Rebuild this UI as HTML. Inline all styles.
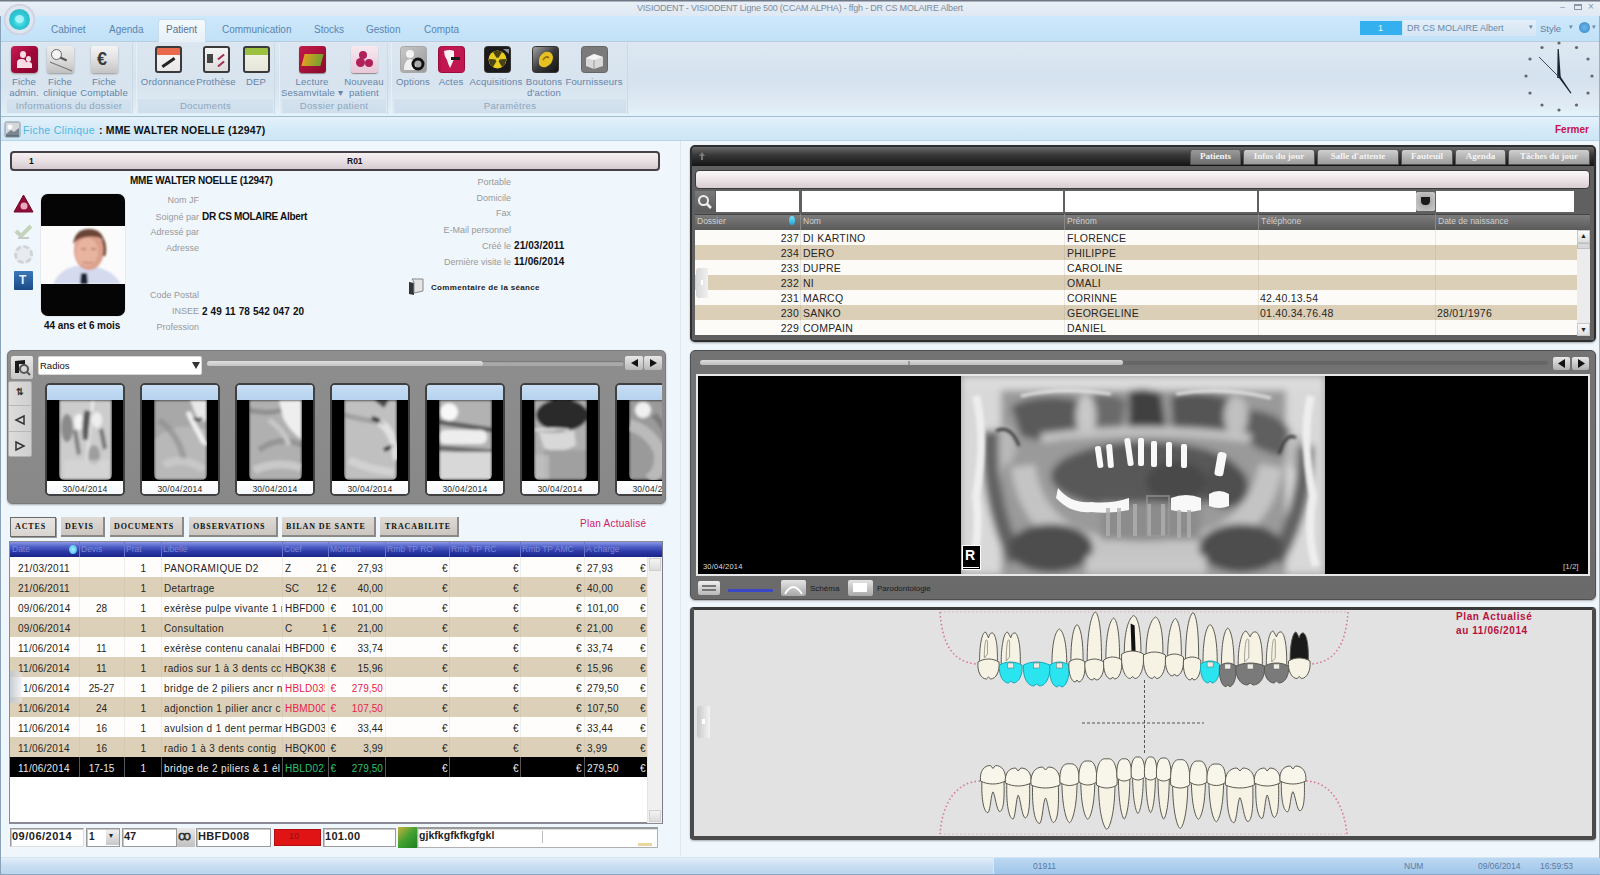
<!DOCTYPE html>
<html><head><meta charset="utf-8">
<style>
*{margin:0;padding:0;box-sizing:border-box}
html,body{width:1600px;height:875px;overflow:hidden;background:#eff6fc;font-family:"Liberation Sans",sans-serif;position:relative}
.a{position:absolute}
.t{position:absolute;white-space:nowrap;line-height:1}
/* top */
#title{left:0;top:0;width:1600px;height:16px;background:linear-gradient(#6d7884 0,#6d7884 1px,#e8eff7 2px,#dfe9f3 100%)}
#tabs{left:0;top:16px;width:1600px;height:25px;background:linear-gradient(#cde8fb,#c2e1f7)}
#ribbon{left:0;top:41px;width:1600px;height:76px;background:linear-gradient(#dde8f2 0,#d5e2ef 50%,#dfeaf4 85%,#e4f4fb 100%);border-top:1px solid #b6cde0;border-bottom:1px solid #9fbdcc}
#hdr{left:0;top:117px;width:1600px;height:24px;background:linear-gradient(#e4f2fb,#d3e9f8 60%,#cfe6f6);border-bottom:1px solid #b9d4e6}
#status{left:0;top:857px;width:1600px;height:18px;background:linear-gradient(#e2eef9,#c9def2 50%,#bcd6ee);border-top:1px solid #d4e4f2;border-bottom:1px solid #8aa6c0}
.tab{position:absolute;top:24px;font-size:10px;color:#5a84b2}
.grp{position:absolute;top:44px;height:70px;border-right:1px solid #c5d6e4;}
.glab{position:absolute;top:99px;height:14px;background:linear-gradient(#d3e2ee,#cfdeeb);font-size:9.6px;letter-spacing:0.3px;color:#8ea6be;text-align:center;line-height:14px}
.ico{position:absolute;top:46px;width:27px;height:27px;border-radius:3px}
.lab{position:absolute;font-size:9.6px;letter-spacing:0.15px;color:#6686aa;text-align:center;line-height:11px;white-space:nowrap}
</style></head><body>
<div id="title" class="a"></div>
<div class="t" style="left:637px;top:4px;font-size:9px;color:#7f8b98;letter-spacing:-0.2px">VISIODENT - VISIODENT Ligne 500 (CCAM ALPHA) - ffgh - DR CS MOLAIRE Albert</div>
<div id="tabs" class="a"></div>
<div id="ribbon" class="a"></div>
<div id="hdr" class="a"></div>
<div id="status" class="a"></div>

<!-- orb -->
<div class="a" style="left:4px;top:4px;width:31px;height:31px;border-radius:50%;background:radial-gradient(circle at 50% 50%,#e8f0f8 0,#dce6f0 60%,#c8b8cc 75%,#e4eaf2 100%)"></div>
<div class="a" style="left:9px;top:9px;width:21px;height:21px;border-radius:50%;background:radial-gradient(circle at 50% 55%,#7af0f4 0,#2cc8d4 45%,#3aaec4 100%)"></div>
<div class="a" style="left:15px;top:15px;width:9px;height:8px;border-radius:50% 50% 50% 50%;background:#b8f6fa;opacity:.8"></div>
<!-- tabs -->
<div class="a" style="left:158px;top:19px;width:48px;height:23px;background:linear-gradient(#f4f9fd,#e6f0f8);border:1px solid #c8dcec;border-bottom:none;border-radius:3px 3px 0 0"></div>
<div class="tab" style="left:51px">Cabinet</div>
<div class="tab" style="left:109px">Agenda</div>
<div class="tab" style="left:166px;color:#5a7290">Patient</div>
<div class="tab" style="left:222px">Communication</div>
<div class="tab" style="left:314px">Stocks</div>
<div class="tab" style="left:366px">Gestion</div>
<div class="tab" style="left:424px">Compta</div>
<!-- window controls -->
<div class="t" style="left:1560px;top:3px;font-size:9px;color:#8a96a4">–</div>
<div class="a" style="left:1574px;top:4px;width:8px;height:6px;border:1px solid #8a96a4;border-top-width:2px"></div>
<div class="t" style="left:1588px;top:2px;font-size:10px;color:#8a96a4">×</div>
<!-- right controls -->
<div class="a" style="left:1360px;top:21px;width:42px;height:14px;background:#35b0ee"></div>
<div class="t" style="left:1378px;top:24px;font-size:9px;color:#e8f6ff">1</div>
<div class="a" style="left:1403px;top:20px;width:133px;height:16px;background:linear-gradient(#e2eef8,#d6e6f4)"></div>
<div class="t" style="left:1407px;top:24px;font-size:9px;color:#6a88a8">DR CS MOLAIRE Albert</div>
<div class="t" style="left:1529px;top:23px;font-size:7px;color:#6a88a8">▾</div>
<div class="t" style="left:1540px;top:24px;font-size:9.5px;color:#5f82a8">Style</div>
<div class="t" style="left:1569px;top:23px;font-size:7px;color:#6a88a8">▾</div>
<div class="a" style="left:1579px;top:22px;width:11px;height:11px;border-radius:50%;background:radial-gradient(#6ab8ea,#3a88c8)"></div>
<div class="t" style="left:1592px;top:23px;font-size:7px;color:#6a88a8">▾</div>
<!-- ribbon groups -->
<div class="a" style="left:2px;top:43px;width:131px;height:71px;background:linear-gradient(#dbe6f0,#d7e3ee 60%,#e1edf6);border-right:1px solid #cadbe8"></div>
<div class="a" style="left:136px;top:43px;width:139px;height:71px;background:linear-gradient(#dbe6f0,#d7e3ee 60%,#e1edf6);border-right:1px solid #cadbe8;border-left:1px solid #e6eef6"></div>
<div class="a" style="left:279px;top:43px;width:109px;height:71px;background:linear-gradient(#dbe6f0,#d7e3ee 60%,#e1edf6);border-right:1px solid #cadbe8;border-left:1px solid #e6eef6"></div>
<div class="a" style="left:391px;top:43px;width:237px;height:71px;background:linear-gradient(#dbe6f0,#d7e3ee 60%,#e1edf6);border-right:1px solid #cadbe8;border-left:1px solid #e6eef6"></div>
<div class="glab" style="left:7px;width:124px">Informations du dossier</div>
<div class="glab" style="left:138px;width:135px">Documents</div>
<div class="glab" style="left:282px;width:104px">Dossier patient</div>
<div class="glab" style="left:394px;width:232px">Paramètres</div>
<!-- icons -->
<div class="ico" style="left:11px;background:linear-gradient(135deg,#c81c58,#a00838 50%,#8a0630);box-shadow:0 1px 2px #999;border-radius:4px"></div>
<div class="a" style="left:20px;top:51px;width:6px;height:7px;border-radius:50%;background:#f8dce6"></div>
<div class="a" style="left:26px;top:56px;width:5px;height:6px;border-radius:50%;background:#f8dce6"></div>
<div class="a" style="left:17px;top:59px;width:9px;height:9px;border-radius:4px 4px 0 0;background:#f8dce6"></div>
<div class="a" style="left:24px;top:62px;width:8px;height:6px;border-radius:3px 3px 0 0;background:#f8dce6"></div>
<div class="ico" style="left:47px;background:linear-gradient(#ececec,#d8d8d8 60%,#c0c0c0);box-shadow:0 1px 2px #999"></div>
<div class="a" style="left:51px;top:49px;width:11px;height:11px;border-radius:50%;border:1.5px solid #666;background:#f4f4f4"></div>
<div class="a" style="left:60px;top:58px;width:7px;height:2px;background:#555;transform:rotate(25deg)"></div><div class="a" style="left:49px;top:66px;width:24px;height:1px;background:#777;transform:rotate(22deg)"></div>
<div class="ico" style="left:91px;background:linear-gradient(#f4f4f4,#e0e0e0 50%,#c4c4c4);box-shadow:0 1px 2px #999"></div>
<div class="t" style="left:97px;top:50px;font-size:18px;font-weight:bold;color:#3a3a3a">€</div>
<div class="ico" style="left:155px;background:linear-gradient(#e86a4a 0,#e86a4a 30%,#f4f4f4 30%,#e8e8e8);border:2px solid #3a3a3a"></div>
<div class="a" style="left:161px;top:61px;width:15px;height:3px;background:#222;transform:rotate(-35deg)"></div>
<div class="ico" style="left:203px;background:linear-gradient(#f4f4f4,#dcdcdc);border:2px solid #3a3a3a"></div>
<div class="a" style="left:207px;top:54px;width:6px;height:9px;background:#444"></div>
<div class="a" style="left:217px;top:56px;width:8px;height:2px;background:#a03050;transform:rotate(-40deg)"></div>
<div class="a" style="left:217px;top:63px;width:8px;height:2px;background:#a03050;transform:rotate(-40deg)"></div>
<div class="ico" style="left:243px;background:linear-gradient(#9cc040 0,#9cc040 30%,#f0f0e4 30%,#e4e4d8);border:2px solid #3a3a3a"></div>
<div class="ico" style="left:299px;background:linear-gradient(135deg,#c41a4a,#8a0a2a);box-shadow:0 1px 1px #888"></div>
<div class="a" style="left:303px;top:54px;width:19px;height:12px;background:linear-gradient(90deg,#e0a020,#70a030);transform:skewX(-15deg)"></div>
<div class="ico" style="left:351px;background:linear-gradient(#f8e8f0,#e8c8d8);box-shadow:0 1px 1px #888"></div>
<div class="a" style="left:359px;top:51px;width:8px;height:8px;border-radius:50%;background:#b0205a"></div>
<div class="a" style="left:356px;top:58px;width:9px;height:9px;border-radius:50%;background:#b0205a"></div>
<div class="a" style="left:365px;top:59px;width:8px;height:8px;border-radius:50%;background:#b0205a"></div>
<svg class="a" style="left:400px;top:46px" width="28" height="28" viewBox="0 0 28 28"><defs><linearGradient id="opg" x1="0" y1="0" x2="1" y2="1"><stop offset="0" stop-color="#c8c8c8"/><stop offset="1" stop-color="#9a9a9a"/></linearGradient></defs><rect x="0.5" y="0.5" width="26" height="26" rx="3" fill="url(#opg)" stroke="#a8a8a8"/><circle cx="10" cy="8" r="4" fill="#f4f4f4"/><path d="M4 24 Q4 14 10 13 Q16 14 16 24Z" fill="#f0f0f0"/><circle cx="18" cy="18" r="5" fill="none" stroke="#111" stroke-width="3"/></svg>
<svg class="a" style="left:438px;top:46px" width="28" height="28" viewBox="0 0 28 28"><rect x="0.5" y="0.5" width="26" height="26" rx="3" fill="#b8124a" stroke="#9a0a3a"/><path d="M3 0 L22 0 L26 4 L26 26 L3 26Z" fill="#c81c58" opacity=".5"/><path d="M6 5 Q12 3 16 5 L16 13 Q14 18 12 22 Q10 18 9 14 Q6 10 6 5Z" fill="#f8f0f4"/><rect x="13" y="11" width="9" height="3" fill="#1a1a1a"/></svg>
<svg class="a" style="left:484px;top:46px" width="28" height="28" viewBox="0 0 28 28"><rect x="0.5" y="0.5" width="26" height="26" rx="3" fill="#1a1a1a" stroke="#333"/><circle cx="13.5" cy="13.5" r="9" fill="#e8cc20"/><path d="M13.5 13.5 L9 6 A9 9 0 0 1 18 6Z M13.5 13.5 L22 13 A9 9 0 0 1 18 21Z M13.5 13.5 L9 21 A9 9 0 0 1 5 13Z" fill="#2a2a10" opacity=".85"/><circle cx="13.5" cy="13.5" r="2" fill="#e8cc20"/><path d="M19 3 L25 3 L25 8Z" fill="#ddd" opacity=".6"/></svg>
<svg class="a" style="left:532px;top:46px" width="28" height="28" viewBox="0 0 28 28"><defs><linearGradient id="bag" x1="0" y1="0" x2="1" y2="1"><stop offset="0" stop-color="#a8a8a8"/><stop offset=".5" stop-color="#3a3a3a"/><stop offset="1" stop-color="#111"/></linearGradient></defs><rect x="0.5" y="0.5" width="26" height="26" rx="3" fill="url(#bag)" stroke="#333"/><path d="M7 18 Q6 9 13 6 Q20 5 21 11 Q21 18 14 21 Q9 22 7 18Z" fill="#e4c020"/><path d="M11 14 Q14 9 17 12" stroke="#8a6a10" stroke-width="1.5" fill="none"/></svg>
<svg class="a" style="left:581px;top:46px" width="28" height="28" viewBox="0 0 28 28"><rect x="0.5" y="0.5" width="26" height="26" rx="3" fill="#7a7a7a" stroke="#666"/><path d="M5 12 L13 8 L22 11 L22 20 L13 23 L5 20Z" fill="#d8d8d8"/><path d="M13 8 L22 11 L13 14 L5 12Z" fill="#f4f4f4"/><path d="M13 14 L13 23" stroke="#999" stroke-width="1"/></svg>
<!-- labels -->
<div class="lab" style="left:24px;top:76px;transform:translateX(-50%)">Fiche<br>admin.</div>
<div class="lab" style="left:60px;top:76px;transform:translateX(-50%)">Fiche<br>clinique</div>
<div class="lab" style="left:104px;top:76px;transform:translateX(-50%)">Fiche<br>Comptable</div>
<div class="lab" style="left:168px;top:76px;transform:translateX(-50%)">Ordonnance</div>
<div class="lab" style="left:216px;top:76px;transform:translateX(-50%)">Prothèse</div>
<div class="lab" style="left:256px;top:76px;transform:translateX(-50%)">DEP</div>
<div class="lab" style="left:312px;top:76px;transform:translateX(-50%)">Lecture<br>Sesamvitale ▾</div>
<div class="lab" style="left:364px;top:76px;transform:translateX(-50%)">Nouveau<br>patient</div>
<div class="lab" style="left:413px;top:76px;transform:translateX(-50%)">Options</div>
<div class="lab" style="left:451px;top:76px;transform:translateX(-50%)">Actes</div>
<div class="lab" style="left:496px;top:76px;transform:translateX(-50%)">Acquisitions</div>
<div class="lab" style="left:544px;top:76px;transform:translateX(-50%)">Boutons<br>d'action</div>
<div class="lab" style="left:594px;top:76px;transform:translateX(-50%)">Fournisseurs</div>
<!-- clock -->
<svg class="a" style="left:1518px;top:38px" width="84" height="78" viewBox="0 0 84 78">
<g fill="#666">
<circle cx="41" cy="5" r="1.6"/><circle cx="58.5" cy="9.5" r="1.6"/><circle cx="70" cy="21" r="1.6"/><circle cx="74" cy="38" r="1.6"/><circle cx="70" cy="55" r="1.6"/><circle cx="58.5" cy="67" r="1.6"/><circle cx="41" cy="72" r="1.6"/><circle cx="24" cy="67" r="1.6"/><circle cx="12" cy="55" r="1.6"/><circle cx="8" cy="38" r="1.6"/><circle cx="12" cy="21" r="1.6"/><circle cx="24" cy="9.5" r="1.6"/>
</g>
<path d="M39.2 40 L42.8 40 L40.8 11 L39.6 11 Z" fill="#1a2530"/>
<path d="M39.5 38 L42.5 38.5 L53.5 55 L52.5 55.5 Z" fill="#1a2530"/>
<line x1="41" y1="39" x2="21" y2="19" stroke="#3a4a58" stroke-width="1"/>
</svg>
<!-- header -->
<svg class="a" style="left:4px;top:121px" width="17" height="17" viewBox="0 0 17 17"><rect x="1" y="1" width="15" height="15" rx="1.5" fill="#d4d8dc" stroke="#8a949e"/><circle cx="6" cy="6" r="2.5" fill="#fafafa"/><path d="M2 13 L7 9 L10 11 L15 7 L15 15 L2 15Z" fill="#7a8692"/><path d="M2 15 L15 15" stroke="#5a6670" stroke-width="1.5"/></svg>
<div class="t" style="left:23px;top:125px;font-size:10.5px;color:#4ab8e4;letter-spacing:0.38px">Fiche Clinique</div>
<div class="t" style="left:99px;top:125px;font-size:10.5px;color:#111;font-weight:bold;letter-spacing:0.16px">: MME WALTER NOELLE (12947)</div>
<div class="t" style="left:1555px;top:125px;font-size:10px;color:#c8104a;font-weight:bold">Fermer</div>

<!-- ============ LEFT: patient info ============ -->
<div class="a" style="left:10px;top:151px;width:650px;height:20px;border:2px solid #454045;border-radius:4px;background:linear-gradient(#f6f0f2,#e8dfe3 50%,#d4cacf)"></div>
<div class="t" style="left:29px;top:157px;font-size:8.5px;font-weight:bold;color:#111">1</div>
<div class="t" style="left:347px;top:157px;font-size:8.5px;font-weight:bold;color:#111">R01</div>
<div class="t" style="left:130px;top:176px;font-size:10px;font-weight:bold;color:#111;letter-spacing:-0.22px">MME WALTER NOELLE (12947)</div>
<!-- side icons -->
<svg class="a" style="left:13px;top:194px" width="21" height="19"><path d="M10.5 1 L20 18 L1 18 Z" fill="#900c38" stroke="#700828" stroke-width="1"/><circle cx="11" cy="12" r="3.5" fill="#e8a8c0"/></svg>
<svg class="a" style="left:14px;top:222px" width="19" height="17"><path d="M2 9 L7 14 L17 4" fill="none" stroke="#c4d4bc" stroke-width="4"/><path d="M4 16 L15 16" stroke="#c8ccc8" stroke-width="2"/></svg>
<div class="a" style="left:14px;top:245px;width:19px;height:19px;border-radius:50%;border:3px dashed #d0d4d8;background:#e8ecf0"></div>
<div class="a" style="left:14px;top:271px;width:19px;height:19px;background:linear-gradient(#3a78b8,#1a4a88);border-radius:1px"></div>
<div class="t" style="left:19px;top:274px;font-size:12px;font-weight:bold;color:#e0f0ff">T</div>
<!-- photo -->
<div class="a" style="left:41px;top:194px;width:84px;height:122px;background:#050505;border-radius:7px;overflow:hidden;box-shadow:0 0 1px #888">
<svg class="a" style="left:0;top:32px" width="84" height="58" viewBox="0 0 84 58"><defs><filter id="phb"><feGaussianBlur stdDeviation="1.1"/></filter></defs>
<rect width="84" height="58" fill="#fbfbfb"/>
<g filter="url(#phb)">
<path d="M12 58 Q18 44 34 40 L52 40 Q72 44 80 58 Z" fill="#d6daee"/>
<path d="M40 47 L46 47 L47 58 L39 58Z" fill="#1c2030"/>
<ellipse cx="48" cy="24" rx="15" ry="20" fill="#dca08c"/>
<ellipse cx="46" cy="26" rx="11" ry="14" fill="#e8b4a0"/>
<path d="M32 18 Q34 3 48 3 Q62 3 64 18 Q62 12 56 11 Q45 9 36 14 Z" fill="#6a4434"/>
<path d="M62 14 Q65 22 63 30" stroke="#7a5040" stroke-width="3" fill="none"/>
<path d="M40 23 L45 23 M50 23 L55 23" stroke="#8a6050" stroke-width="1.2"/>
<path d="M42 36 Q47 38 52 36" stroke="#b07060" stroke-width="1.2" fill="none"/>
</g></svg>
</div>
<div class="t" style="left:44px;top:321px;font-size:10px;font-weight:bold;color:#111;letter-spacing:-0.07px">44 ans et 6 mois</div>
<!-- labels -->
<div class="t" style="left:100px;width:99px;text-align:right;top:196px;font-size:9px;color:#999">Nom JF</div>
<div class="t" style="left:100px;width:99px;text-align:right;top:213px;font-size:9px;color:#999">Soigné par</div>
<div class="t" style="left:100px;width:99px;text-align:right;top:228px;font-size:9px;color:#999">Adressé par</div>
<div class="t" style="left:100px;width:99px;text-align:right;top:244px;font-size:9px;color:#999">Adresse</div>
<div class="t" style="left:100px;width:99px;text-align:right;top:291px;font-size:9px;color:#999">Code Postal</div>
<div class="t" style="left:100px;width:99px;text-align:right;top:307px;font-size:9px;color:#999">INSEE</div>
<div class="t" style="left:100px;width:99px;text-align:right;top:323px;font-size:9px;color:#999">Profession</div>
<div class="t" style="left:202px;top:212px;font-size:10px;font-weight:bold;color:#111;letter-spacing:-0.31px">DR CS MOLAIRE Albert</div>
<div class="t" style="left:202px;top:307px;font-size:10px;font-weight:bold;color:#111;letter-spacing:0.13px">2 49 11 78 542 047 20</div>
<div class="t" style="left:400px;width:111px;text-align:right;top:178px;font-size:9px;color:#999">Portable</div>
<div class="t" style="left:400px;width:111px;text-align:right;top:194px;font-size:9px;color:#999">Domicile</div>
<div class="t" style="left:400px;width:111px;text-align:right;top:209px;font-size:9px;color:#999">Fax</div>
<div class="t" style="left:400px;width:111px;text-align:right;top:226px;font-size:9px;color:#999">E-Mail personnel</div>
<div class="t" style="left:400px;width:111px;text-align:right;top:242px;font-size:9px;color:#999">Créé le</div>
<div class="t" style="left:400px;width:111px;text-align:right;top:258px;font-size:9px;color:#999">Dernière visite le</div>
<div class="t" style="left:514px;top:241px;font-size:10px;font-weight:bold;color:#111;letter-spacing:0.1px">21/03/2011</div>
<div class="t" style="left:514px;top:257px;font-size:10px;font-weight:bold;color:#111;letter-spacing:0.1px">11/06/2014</div>
<svg class="a" style="left:406px;top:276px" width="20" height="20"><path d="M3 6 L3 18 L8 19 L8 7 Z" fill="#333"/><path d="M6 3 L17 3 L17 15 L8 17 L8 6 Z" fill="#e4e4e4" stroke="#888" stroke-width="1"/></svg>
<div class="t" style="left:431px;top:284px;font-size:8px;color:#222;font-weight:bold;letter-spacing:0.33px">Commentaire de la séance</div>

<!-- ============ RADIOS panel ============ -->
<div class="a" style="left:7px;top:350px;width:659px;height:154px;background:linear-gradient(#8e8e8e,#888888);border-radius:5px;border:1px solid #7a7a7a;box-shadow:0 1px 2px rgba(0,0,0,.3);overflow:hidden">
</div>
<div class="a" style="left:11px;top:356px;width:22px;height:23px;background:linear-gradient(#e8e8e8,#c8c8c8);border-radius:2px"></div>
<svg class="a" style="left:13px;top:358px" width="18" height="18"><path d="M2 3 L12 2 L12 6 L6 6 L6 15 L2 15 Z" fill="#1a1a1a"/><circle cx="11" cy="11" r="4" fill="none" stroke="#555" stroke-width="2"/><path d="M14 14 L17 17" stroke="#555" stroke-width="2"/></svg>
<div class="a" style="left:8px;top:381px;width:24px;height:76px;background:linear-gradient(90deg,#dcdcdc,#cfcfcf);border-radius:2px;border:1px solid #b0b0b0"></div>
<div class="a" style="left:9px;top:405px;width:22px;height:1px;background:#b8b8b8"></div>
<div class="a" style="left:9px;top:431px;width:22px;height:1px;background:#b8b8b8"></div>
<div class="t" style="left:16px;top:388px;font-size:9px;color:#333;font-weight:bold">⇅</div>
<svg class="a" style="left:14px;top:414px" width="12" height="12"><path d="M10 2 L2 6 L10 10 Z" fill="none" stroke="#333" stroke-width="1.5"/></svg>
<svg class="a" style="left:14px;top:440px" width="12" height="12"><path d="M2 2 L10 6 L2 10 Z" fill="none" stroke="#333" stroke-width="1.5"/></svg>
<div class="a" style="left:38px;top:356px;width:164px;height:19px;background:#fff;border:1px solid #d8d8d8;border-radius:2px"></div>
<div class="t" style="left:40px;top:361px;font-size:9.5px;color:#111">Radios</div>
<svg class="a" style="left:192px;top:362px" width="8" height="7"><path d="M0 0 L8 0 L4 7 Z" fill="#333"/></svg>
<div class="a" style="left:207px;top:361px;width:417px;height:5px;background:#a8a8a8;border-radius:3px;box-shadow:inset 0 1px 1px #777"></div>
<div class="a" style="left:207px;top:361px;width:276px;height:5px;background:linear-gradient(#e0e0e0,#c4c4c4);border-radius:3px"></div>
<div class="a" style="left:625px;top:356px;width:18px;height:14px;background:linear-gradient(#e8e8e8,#b8b8b8);border-radius:2px"></div>
<div class="a" style="left:644px;top:356px;width:18px;height:14px;background:linear-gradient(#e8e8e8,#b8b8b8);border-radius:2px"></div>
<svg class="a" style="left:629px;top:359px" width="10" height="8"><path d="M9 0 L9 8 L2 4 Z" fill="#111"/></svg>
<svg class="a" style="left:649px;top:359px" width="10" height="8"><path d="M1 0 L8 4 L1 8 Z" fill="#111"/></svg>
<div class="a" style="left:38px;top:380px;width:624px;height:120px;overflow:hidden">
<div class="a" style="left:-38px;top:-380px;width:700px;height:600px">
<div class="a" style="left:45px;top:383px;width:80px;height:113px;border:2px solid #404040;border-radius:5px;background:#fff;overflow:hidden">
<div class="a" style="left:0;top:0;width:76px;height:15px;background:linear-gradient(#c8def4,#b6d2ee)"></div>
<div class="a" style="left:0;top:15px;width:76px;height:81px;background:#000"></div>
<svg class="a" style="left:12px;top:15px" width="53" height="81" viewBox="0 0 53 81"><defs><clipPath id="cp0"><path d="M0 0 L53 0 L53 74 Q53 80 47 80 L6 80 Q0 80 0 74Z"/></clipPath><filter id="bl0" x="-10%" y="-10%" width="120%" height="120%"><feGaussianBlur stdDeviation="1.6"/></filter></defs><g clip-path="url(#cp0)"><g filter="url(#bl0)"><rect width="53" height="80" fill="#c4c4c4"/>
 <path d="M0 0 L53 0 L53 80 L0 80Z" fill="#d4d4d4" opacity=".5"/>
 <ellipse cx="8" cy="28" rx="6" ry="14" fill="#8a8a8a"/>
 <ellipse cx="20" cy="22" rx="5" ry="8" fill="#f4f4f4"/>
 <ellipse cx="38" cy="20" rx="5" ry="8" fill="#eeeeee"/>
 <path d="M26 10 Q22 20 24 40 L30 40 Q30 22 34 12Z" fill="#3a3a3a" opacity=".8"/>
 <path d="M40 30 Q42 40 44 50 L48 48 Q46 36 44 28Z" fill="#3a3a3a" opacity=".6"/>
 <path d="M14 30 Q16 45 18 55 L22 54 Q20 40 18 30Z" fill="#4a4a4a" opacity=".6"/>
 <path d="M33 0 L35 0 L28 60 L27 60Z" fill="#fafafa"/>
 <ellipse cx="35" cy="55" rx="6" ry="10" fill="#5a5a5a" opacity=".4"/>
 <rect x="5" y="60" width="45" height="20" fill="#d8d8d8" opacity=".6"/></g></g></svg>
<div class="a" style="left:0;top:96px;width:76px;height:15px;background:linear-gradient(#fff,#f4f8fc)"></div>
<div class="t" style="left:0;width:76px;text-align:center;top:100px;font-size:8.5px;color:#2a2a2a;letter-spacing:0.27px">30/04/2014</div>
</div><div class="a" style="left:140px;top:383px;width:80px;height:113px;border:2px solid #404040;border-radius:5px;background:#fff;overflow:hidden">
<div class="a" style="left:0;top:0;width:76px;height:15px;background:linear-gradient(#c8def4,#b6d2ee)"></div>
<div class="a" style="left:0;top:15px;width:76px;height:81px;background:#000"></div>
<svg class="a" style="left:12px;top:15px" width="53" height="81" viewBox="0 0 53 81"><defs><clipPath id="cp1"><path d="M0 0 L53 0 L53 74 Q53 80 47 80 L6 80 Q0 80 0 74Z"/></clipPath><filter id="bl1" x="-10%" y="-10%" width="120%" height="120%"><feGaussianBlur stdDeviation="1.6"/></filter></defs><g clip-path="url(#cp1)"><g filter="url(#bl1)"><rect width="53" height="80" fill="#a8a8a8"/>
 <path d="M0 40 Q20 20 53 30 L53 80 L0 80Z" fill="#b8b8b8"/>
 <path d="M36 0 L53 0 L53 20 Q45 25 40 10Z" fill="#e8e8e8"/>
 <path d="M34 12 Q40 25 46 35 Q50 45 53 42" stroke="#f0f0f0" stroke-width="5" fill="none"/>
 <path d="M40 18 Q44 22 48 18" stroke="#3a3a3a" stroke-width="3" fill="none"/>
 <path d="M5 20 Q25 35 30 60" stroke="#8a8a8a" stroke-width="6" fill="none" opacity=".6"/>
 <path d="M10 65 Q30 55 50 70" stroke="#d0d0d0" stroke-width="8" fill="none" opacity=".6"/></g></g></svg>
<div class="a" style="left:0;top:96px;width:76px;height:15px;background:linear-gradient(#fff,#f4f8fc)"></div>
<div class="t" style="left:0;width:76px;text-align:center;top:100px;font-size:8.5px;color:#2a2a2a;letter-spacing:0.27px">30/04/2014</div>
</div><div class="a" style="left:235px;top:383px;width:80px;height:113px;border:2px solid #404040;border-radius:5px;background:#fff;overflow:hidden">
<div class="a" style="left:0;top:0;width:76px;height:15px;background:linear-gradient(#c8def4,#b6d2ee)"></div>
<div class="a" style="left:0;top:15px;width:76px;height:81px;background:#000"></div>
<svg class="a" style="left:12px;top:15px" width="53" height="81" viewBox="0 0 53 81"><defs><clipPath id="cp2"><path d="M0 0 L53 0 L53 74 Q53 80 47 80 L6 80 Q0 80 0 74Z"/></clipPath><filter id="bl2" x="-10%" y="-10%" width="120%" height="120%"><feGaussianBlur stdDeviation="1.6"/></filter></defs><g clip-path="url(#cp2)"><g filter="url(#bl2)"><rect width="53" height="80" fill="#b0b0b0"/>
 <path d="M30 0 L53 0 L53 40 Q40 30 34 18Z" fill="#eeeeee"/>
 <path d="M0 10 Q20 15 32 10" stroke="#7a7a7a" stroke-width="5" fill="none" opacity=".6"/>
 <path d="M10 50 Q30 35 53 45" stroke="#7a7a7a" stroke-width="6" fill="none" opacity=".5"/>
 <path d="M5 70 Q30 60 53 68" stroke="#d4d4d4" stroke-width="8" fill="none" opacity=".7"/>
 <path d="M20 20 Q35 30 40 45" stroke="#c8c8c8" stroke-width="5" fill="none"/></g></g></svg>
<div class="a" style="left:0;top:96px;width:76px;height:15px;background:linear-gradient(#fff,#f4f8fc)"></div>
<div class="t" style="left:0;width:76px;text-align:center;top:100px;font-size:8.5px;color:#2a2a2a;letter-spacing:0.27px">30/04/2014</div>
</div><div class="a" style="left:330px;top:383px;width:80px;height:113px;border:2px solid #404040;border-radius:5px;background:#fff;overflow:hidden">
<div class="a" style="left:0;top:0;width:76px;height:15px;background:linear-gradient(#c8def4,#b6d2ee)"></div>
<div class="a" style="left:0;top:15px;width:76px;height:81px;background:#000"></div>
<svg class="a" style="left:12px;top:15px" width="53" height="81" viewBox="0 0 53 81"><defs><clipPath id="cp3"><path d="M0 0 L53 0 L53 74 Q53 80 47 80 L6 80 Q0 80 0 74Z"/></clipPath><filter id="bl3" x="-10%" y="-10%" width="120%" height="120%"><feGaussianBlur stdDeviation="1.6"/></filter></defs><g clip-path="url(#cp3)"><g filter="url(#bl3)"><rect width="53" height="80" fill="#b8b8b8"/>
 <path d="M0 0 L53 0 L53 80 L0 80Z" fill="#c8c8c8" opacity=".5"/>
 <path d="M30 0 L45 0 L40 8Z" fill="#4a4a4a"/>
 <path d="M0 15 Q20 20 35 22" stroke="#8a8a8a" stroke-width="5" fill="none" opacity=".6"/>
 <path d="M28 18 Q35 20 40 24" stroke="#2a2a2a" stroke-width="4" fill="none"/>
 <path d="M40 50 Q45 48 50 45" stroke="#2a2a2a" stroke-width="4" fill="none"/>
 <path d="M35 22 Q50 30 53 60" stroke="#e8e8e8" stroke-width="8" fill="none" opacity=".8"/>
 <path d="M5 60 Q25 70 50 72" stroke="#d8d8d8" stroke-width="8" fill="none" opacity=".7"/></g></g></svg>
<div class="a" style="left:0;top:96px;width:76px;height:15px;background:linear-gradient(#fff,#f4f8fc)"></div>
<div class="t" style="left:0;width:76px;text-align:center;top:100px;font-size:8.5px;color:#2a2a2a;letter-spacing:0.27px">30/04/2014</div>
</div><div class="a" style="left:425px;top:383px;width:80px;height:113px;border:2px solid #404040;border-radius:5px;background:#fff;overflow:hidden">
<div class="a" style="left:0;top:0;width:76px;height:15px;background:linear-gradient(#c8def4,#b6d2ee)"></div>
<div class="a" style="left:0;top:15px;width:76px;height:81px;background:#000"></div>
<svg class="a" style="left:12px;top:15px" width="53" height="81" viewBox="0 0 53 81"><defs><clipPath id="cp4"><path d="M0 0 L53 0 L53 74 Q53 80 47 80 L6 80 Q0 80 0 74Z"/></clipPath><filter id="bl4" x="-10%" y="-10%" width="120%" height="120%"><feGaussianBlur stdDeviation="1.6"/></filter></defs><g clip-path="url(#cp4)"><g filter="url(#bl4)"><rect width="53" height="80" fill="#a8a8a8"/>
 <rect x="0" y="0" width="53" height="80" fill="#bcbcbc" opacity=".5"/>
 <ellipse cx="10" cy="12" rx="9" ry="9" fill="#f8f8f8"/>
 <path d="M0 22 L53 30" stroke="#3a3a3a" stroke-width="5" opacity=".7"/>
 <rect x="0" y="30" width="48" height="14" rx="6" fill="#eeeeee"/>
 <path d="M0 48 L53 52" stroke="#3a3a3a" stroke-width="5" opacity=".6"/>
 <rect x="0" y="52" width="53" height="28" fill="#d8d8d8"/></g></g></svg>
<div class="a" style="left:0;top:96px;width:76px;height:15px;background:linear-gradient(#fff,#f4f8fc)"></div>
<div class="t" style="left:0;width:76px;text-align:center;top:100px;font-size:8.5px;color:#2a2a2a;letter-spacing:0.27px">30/04/2014</div>
</div><div class="a" style="left:520px;top:383px;width:80px;height:113px;border:2px solid #404040;border-radius:5px;background:#fff;overflow:hidden">
<div class="a" style="left:0;top:0;width:76px;height:15px;background:linear-gradient(#c8def4,#b6d2ee)"></div>
<div class="a" style="left:0;top:15px;width:76px;height:81px;background:#000"></div>
<svg class="a" style="left:12px;top:15px" width="53" height="81" viewBox="0 0 53 81"><defs><clipPath id="cp5"><path d="M0 0 L53 0 L53 74 Q53 80 47 80 L6 80 Q0 80 0 74Z"/></clipPath><filter id="bl5" x="-10%" y="-10%" width="120%" height="120%"><feGaussianBlur stdDeviation="1.6"/></filter></defs><g clip-path="url(#cp5)"><g filter="url(#bl5)"><rect width="53" height="80" fill="#b0b0b0"/>
 <ellipse cx="28" cy="15" rx="26" ry="16" fill="#2a2a2a"/>
 <path d="M5 32 Q25 35 40 30 L42 45 Q25 55 10 48Z" fill="#d8d8d8"/>
 <path d="M0 30 Q20 28 35 30" stroke="#eaeaea" stroke-width="2" fill="none"/>
 <rect x="10" y="50" width="43" height="30" fill="#a0a0a0"/>
 <rect x="0" y="55" width="15" height="25" fill="#c8c8c8" opacity=".6"/></g></g></svg>
<div class="a" style="left:0;top:96px;width:76px;height:15px;background:linear-gradient(#fff,#f4f8fc)"></div>
<div class="t" style="left:0;width:76px;text-align:center;top:100px;font-size:8.5px;color:#2a2a2a;letter-spacing:0.27px">30/04/2014</div>
</div><div class="a" style="left:615px;top:383px;width:80px;height:113px;border:2px solid #404040;border-radius:5px;background:#fff;overflow:hidden">
<div class="a" style="left:0;top:0;width:76px;height:15px;background:linear-gradient(#c8def4,#b6d2ee)"></div>
<div class="a" style="left:0;top:15px;width:76px;height:81px;background:#000"></div>
<svg class="a" style="left:12px;top:15px" width="53" height="81" viewBox="0 0 53 81"><defs><clipPath id="cp6"><path d="M0 0 L53 0 L53 74 Q53 80 47 80 L6 80 Q0 80 0 74Z"/></clipPath><filter id="bl6" x="-10%" y="-10%" width="120%" height="120%"><feGaussianBlur stdDeviation="1.6"/></filter></defs><g clip-path="url(#cp6)"><g filter="url(#bl6)"><rect width="53" height="80" fill="#9a9a9a"/>
 <circle cx="14" cy="10" r="8" fill="#f0f0f0"/>
 <path d="M0 25 Q20 30 30 50 Q35 70 20 80" stroke="#c8c8c8" stroke-width="12" fill="none" opacity=".7"/>
 <path d="M25 15 Q40 30 45 55" stroke="#5a5a5a" stroke-width="6" fill="none" opacity=".5"/>
 <circle cx="40" cy="65" r="7" fill="#c0c0c0"/></g></g></svg>
<div class="a" style="left:0;top:96px;width:76px;height:15px;background:linear-gradient(#fff,#f4f8fc)"></div>
<div class="t" style="left:0;width:76px;text-align:center;top:100px;font-size:8.5px;color:#2a2a2a;letter-spacing:0.27px">30/04/2014</div>
</div>
</div></div>
<!-- tabs -->
<div class="a" style="left:10px;top:517px;width:46px;height:20px;background:linear-gradient(#e8e6e4,#d8d4d0);border:1px solid #6a6a6a;box-shadow:1px 1px 0 #999"></div>
<div class="a" style="left:61px;top:517px;width:44px;height:20px;background:linear-gradient(#dedad6,#ccc6c0);border-right:2px solid #8a8a8a;border-bottom:2px solid #8a8a8a"></div>
<div class="a" style="left:110px;top:517px;width:74px;height:20px;background:linear-gradient(#dedad6,#ccc6c0);border-right:2px solid #8a8a8a;border-bottom:2px solid #8a8a8a"></div>
<div class="a" style="left:189px;top:517px;width:89px;height:20px;background:linear-gradient(#dedad6,#ccc6c0);border-right:2px solid #8a8a8a;border-bottom:2px solid #8a8a8a"></div>
<div class="a" style="left:282px;top:517px;width:94px;height:20px;background:linear-gradient(#dedad6,#ccc6c0);border-right:2px solid #8a8a8a;border-bottom:2px solid #8a8a8a"></div>
<div class="a" style="left:380px;top:517px;width:79px;height:20px;background:linear-gradient(#dedad6,#ccc6c0);border-right:2px solid #8a8a8a;border-bottom:2px solid #8a8a8a"></div>
<div class="t" style="left:15px;top:523px;font-size:8px;font-weight:bold;color:#111;font-family:'Liberation Serif',serif;letter-spacing:0.9px">ACTES</div>
<div class="t" style="left:65px;top:523px;font-size:8px;font-weight:bold;color:#111;font-family:'Liberation Serif',serif;letter-spacing:0.9px">DEVIS</div>
<div class="t" style="left:114px;top:523px;font-size:8px;font-weight:bold;color:#111;font-family:'Liberation Serif',serif;letter-spacing:0.9px">DOCUMENTS</div>
<div class="t" style="left:193px;top:523px;font-size:8px;font-weight:bold;color:#111;font-family:'Liberation Serif',serif;letter-spacing:0.9px">OBSERVATIONS</div>
<div class="t" style="left:286px;top:523px;font-size:8px;font-weight:bold;color:#111;font-family:'Liberation Serif',serif;letter-spacing:0.9px">BILAN DE SANTE</div>
<div class="t" style="left:385px;top:523px;font-size:8px;font-weight:bold;color:#111;font-family:'Liberation Serif',serif;letter-spacing:0.9px">TRACABILITE</div>
<div class="t" style="left:580px;top:519px;font-size:10px;color:#d01a6a;letter-spacing:0.25px">Plan Actualisé</div>

<!-- ============ ACTES table ============ -->
<div class="a" style="left:9px;top:541px;width:654px;height:283px;background:#fff;border:1px solid #8a8a96;border-right:2px solid #7a7a88;border-bottom:2px solid #8a8a96"></div>
<div class="a" style="left:10px;top:542px;width:652px;height:15px;background:linear-gradient(#8a96e8 0,#5262c8 30%,#2c38a4 65%,#1a2488 100%)"></div>
<div class="t" style="left:12px;top:545px;font-size:8.5px;color:#7c88d8">Date</div><div class="t" style="left:81px;top:545px;font-size:8.5px;color:#7c88d8">Devis</div><div class="a" style="left:79px;top:542px;width:1px;height:15px;background:#6a74c8"></div><div class="t" style="left:126px;top:545px;font-size:8.5px;color:#7c88d8">Prat</div><div class="a" style="left:124px;top:542px;width:1px;height:15px;background:#6a74c8"></div><div class="t" style="left:163px;top:545px;font-size:8.5px;color:#7c88d8">Libellé</div><div class="a" style="left:161px;top:542px;width:1px;height:15px;background:#6a74c8"></div><div class="t" style="left:284px;top:545px;font-size:8.5px;color:#7c88d8">Coef</div><div class="a" style="left:282px;top:542px;width:1px;height:15px;background:#6a74c8"></div><div class="t" style="left:330px;top:545px;font-size:8.5px;color:#7c88d8">Montant</div><div class="a" style="left:328px;top:542px;width:1px;height:15px;background:#6a74c8"></div><div class="t" style="left:387px;top:545px;font-size:8.5px;color:#7c88d8">Rmb TP RO</div><div class="a" style="left:385px;top:542px;width:1px;height:15px;background:#6a74c8"></div><div class="t" style="left:451px;top:545px;font-size:8.5px;color:#7c88d8">Rmb TP RC</div><div class="a" style="left:449px;top:542px;width:1px;height:15px;background:#6a74c8"></div><div class="t" style="left:522px;top:545px;font-size:8.5px;color:#7c88d8">Rmb TP AMC</div><div class="a" style="left:520px;top:542px;width:1px;height:15px;background:#6a74c8"></div><div class="t" style="left:586px;top:545px;font-size:8.5px;color:#7c88d8">A charge</div><div class="a" style="left:584px;top:542px;width:1px;height:15px;background:#6a74c8"></div><div class="a" style="left:69px;top:545px;width:8px;height:9px;border-radius:50% 50% 50% 50%;background:radial-gradient(#a8ecff,#3ab8e8)"></div>
<div class="a" style="left:10px;top:557px;width:637px;height:20px;background:#fefdfb"></div><div class="a" style="left:79px;top:557px;width:1px;height:20px;background:#f2eee8"></div><div class="a" style="left:124px;top:557px;width:1px;height:20px;background:#f2eee8"></div><div class="a" style="left:161px;top:557px;width:1px;height:20px;background:#f2eee8"></div><div class="a" style="left:282px;top:557px;width:1px;height:20px;background:#f2eee8"></div><div class="a" style="left:328px;top:557px;width:1px;height:20px;background:#f2eee8"></div><div class="a" style="left:385px;top:557px;width:1px;height:20px;background:#f2eee8"></div><div class="a" style="left:449px;top:557px;width:1px;height:20px;background:#f2eee8"></div><div class="a" style="left:520px;top:557px;width:1px;height:20px;background:#f2eee8"></div><div class="a" style="left:584px;top:557px;width:1px;height:20px;background:#f2eee8"></div><div class="t" style="left:18px;top:564px;font-size:10px;letter-spacing:0.25px;color:#262626">21/03/2011</div><div class="t" style="left:79px;width:45px;text-align:center;top:564px;font-size:10px;color:#262626"></div><div class="t" style="left:124px;width:22px;text-align:right;top:564px;font-size:10px;color:#262626">1</div><div class="t" style="left:164px;width:118px;overflow:hidden;top:564px;font-size:10px;color:#262626;letter-spacing:0.35px">PANORAMIQUE  D2</div><div class="t" style="left:285px;width:40px;overflow:hidden;top:564px;font-size:10px;color:#262626;letter-spacing:0.2px">Z</div><div class="t" style="left:288px;width:48px;text-align:right;top:564px;font-size:10px;color:#262626">21 €</div><div class="t" style="left:330px;width:53px;text-align:right;top:564px;font-size:10px;color:#262626;letter-spacing:0.1px">27,93</div><div class="t" style="left:442px;top:564px;font-size:10px;color:#262626">€</div><div class="t" style="left:513px;top:564px;font-size:10px;color:#262626">€</div><div class="t" style="left:576px;top:564px;font-size:10px;color:#262626">€</div><div class="t" style="left:587px;top:564px;font-size:10px;color:#262626;letter-spacing:0.2px">27,93</div><div class="t" style="left:640px;top:564px;font-size:10px;color:#262626">€</div>
<div class="a" style="left:10px;top:577px;width:637px;height:20px;background:#ddd0b9"></div><div class="a" style="left:79px;top:577px;width:1px;height:20px;background:#d6c9b2"></div><div class="a" style="left:124px;top:577px;width:1px;height:20px;background:#d6c9b2"></div><div class="a" style="left:161px;top:577px;width:1px;height:20px;background:#d6c9b2"></div><div class="a" style="left:282px;top:577px;width:1px;height:20px;background:#d6c9b2"></div><div class="a" style="left:328px;top:577px;width:1px;height:20px;background:#d6c9b2"></div><div class="a" style="left:385px;top:577px;width:1px;height:20px;background:#d6c9b2"></div><div class="a" style="left:449px;top:577px;width:1px;height:20px;background:#d6c9b2"></div><div class="a" style="left:520px;top:577px;width:1px;height:20px;background:#d6c9b2"></div><div class="a" style="left:584px;top:577px;width:1px;height:20px;background:#d6c9b2"></div><div class="t" style="left:18px;top:584px;font-size:10px;letter-spacing:0.25px;color:#262626">21/06/2011</div><div class="t" style="left:79px;width:45px;text-align:center;top:584px;font-size:10px;color:#262626"></div><div class="t" style="left:124px;width:22px;text-align:right;top:584px;font-size:10px;color:#262626">1</div><div class="t" style="left:164px;width:118px;overflow:hidden;top:584px;font-size:10px;color:#262626;letter-spacing:0.35px">Detartrage</div><div class="t" style="left:285px;width:40px;overflow:hidden;top:584px;font-size:10px;color:#262626;letter-spacing:0.2px">SC</div><div class="t" style="left:288px;width:48px;text-align:right;top:584px;font-size:10px;color:#262626">12 €</div><div class="t" style="left:330px;width:53px;text-align:right;top:584px;font-size:10px;color:#262626;letter-spacing:0.1px">40,00</div><div class="t" style="left:442px;top:584px;font-size:10px;color:#262626">€</div><div class="t" style="left:513px;top:584px;font-size:10px;color:#262626">€</div><div class="t" style="left:576px;top:584px;font-size:10px;color:#262626">€</div><div class="t" style="left:587px;top:584px;font-size:10px;color:#262626;letter-spacing:0.2px">40,00</div><div class="t" style="left:640px;top:584px;font-size:10px;color:#262626">€</div>
<div class="a" style="left:10px;top:597px;width:637px;height:20px;background:#fefdfb"></div><div class="a" style="left:79px;top:597px;width:1px;height:20px;background:#f2eee8"></div><div class="a" style="left:124px;top:597px;width:1px;height:20px;background:#f2eee8"></div><div class="a" style="left:161px;top:597px;width:1px;height:20px;background:#f2eee8"></div><div class="a" style="left:282px;top:597px;width:1px;height:20px;background:#f2eee8"></div><div class="a" style="left:328px;top:597px;width:1px;height:20px;background:#f2eee8"></div><div class="a" style="left:385px;top:597px;width:1px;height:20px;background:#f2eee8"></div><div class="a" style="left:449px;top:597px;width:1px;height:20px;background:#f2eee8"></div><div class="a" style="left:520px;top:597px;width:1px;height:20px;background:#f2eee8"></div><div class="a" style="left:584px;top:597px;width:1px;height:20px;background:#f2eee8"></div><div class="t" style="left:18px;top:604px;font-size:10px;letter-spacing:0.25px;color:#262626">09/06/2014</div><div class="t" style="left:79px;width:45px;text-align:center;top:604px;font-size:10px;color:#262626">28</div><div class="t" style="left:124px;width:22px;text-align:right;top:604px;font-size:10px;color:#262626">1</div><div class="t" style="left:164px;width:118px;overflow:hidden;top:604px;font-size:10px;color:#262626;letter-spacing:0.35px">exérèse pulpe vivante 1 r</div><div class="t" style="left:285px;width:40px;overflow:hidden;top:604px;font-size:10px;color:#262626;letter-spacing:0.2px">HBFD008</div><div class="t" style="left:288px;width:48px;text-align:right;top:604px;font-size:10px;color:#262626">€</div><div class="t" style="left:330px;width:53px;text-align:right;top:604px;font-size:10px;color:#262626;letter-spacing:0.1px">101,00</div><div class="t" style="left:442px;top:604px;font-size:10px;color:#262626">€</div><div class="t" style="left:513px;top:604px;font-size:10px;color:#262626">€</div><div class="t" style="left:576px;top:604px;font-size:10px;color:#262626">€</div><div class="t" style="left:587px;top:604px;font-size:10px;color:#262626;letter-spacing:0.2px">101,00</div><div class="t" style="left:640px;top:604px;font-size:10px;color:#262626">€</div>
<div class="a" style="left:10px;top:617px;width:637px;height:20px;background:#ddd0b9"></div><div class="a" style="left:79px;top:617px;width:1px;height:20px;background:#d6c9b2"></div><div class="a" style="left:124px;top:617px;width:1px;height:20px;background:#d6c9b2"></div><div class="a" style="left:161px;top:617px;width:1px;height:20px;background:#d6c9b2"></div><div class="a" style="left:282px;top:617px;width:1px;height:20px;background:#d6c9b2"></div><div class="a" style="left:328px;top:617px;width:1px;height:20px;background:#d6c9b2"></div><div class="a" style="left:385px;top:617px;width:1px;height:20px;background:#d6c9b2"></div><div class="a" style="left:449px;top:617px;width:1px;height:20px;background:#d6c9b2"></div><div class="a" style="left:520px;top:617px;width:1px;height:20px;background:#d6c9b2"></div><div class="a" style="left:584px;top:617px;width:1px;height:20px;background:#d6c9b2"></div><div class="t" style="left:18px;top:624px;font-size:10px;letter-spacing:0.25px;color:#262626">09/06/2014</div><div class="t" style="left:79px;width:45px;text-align:center;top:624px;font-size:10px;color:#262626"></div><div class="t" style="left:124px;width:22px;text-align:right;top:624px;font-size:10px;color:#262626">1</div><div class="t" style="left:164px;width:118px;overflow:hidden;top:624px;font-size:10px;color:#262626;letter-spacing:0.35px">Consultation</div><div class="t" style="left:285px;width:40px;overflow:hidden;top:624px;font-size:10px;color:#262626;letter-spacing:0.2px">C</div><div class="t" style="left:288px;width:48px;text-align:right;top:624px;font-size:10px;color:#262626">1 €</div><div class="t" style="left:330px;width:53px;text-align:right;top:624px;font-size:10px;color:#262626;letter-spacing:0.1px">21,00</div><div class="t" style="left:442px;top:624px;font-size:10px;color:#262626">€</div><div class="t" style="left:513px;top:624px;font-size:10px;color:#262626">€</div><div class="t" style="left:576px;top:624px;font-size:10px;color:#262626">€</div><div class="t" style="left:587px;top:624px;font-size:10px;color:#262626;letter-spacing:0.2px">21,00</div><div class="t" style="left:640px;top:624px;font-size:10px;color:#262626">€</div>
<div class="a" style="left:10px;top:637px;width:637px;height:20px;background:#fefdfb"></div><div class="a" style="left:79px;top:637px;width:1px;height:20px;background:#f2eee8"></div><div class="a" style="left:124px;top:637px;width:1px;height:20px;background:#f2eee8"></div><div class="a" style="left:161px;top:637px;width:1px;height:20px;background:#f2eee8"></div><div class="a" style="left:282px;top:637px;width:1px;height:20px;background:#f2eee8"></div><div class="a" style="left:328px;top:637px;width:1px;height:20px;background:#f2eee8"></div><div class="a" style="left:385px;top:637px;width:1px;height:20px;background:#f2eee8"></div><div class="a" style="left:449px;top:637px;width:1px;height:20px;background:#f2eee8"></div><div class="a" style="left:520px;top:637px;width:1px;height:20px;background:#f2eee8"></div><div class="a" style="left:584px;top:637px;width:1px;height:20px;background:#f2eee8"></div><div class="t" style="left:18px;top:644px;font-size:10px;letter-spacing:0.25px;color:#262626">11/06/2014</div><div class="t" style="left:79px;width:45px;text-align:center;top:644px;font-size:10px;color:#262626">11</div><div class="t" style="left:124px;width:22px;text-align:right;top:644px;font-size:10px;color:#262626">1</div><div class="t" style="left:164px;width:118px;overflow:hidden;top:644px;font-size:10px;color:#262626;letter-spacing:0.35px">exérèse contenu canalai</div><div class="t" style="left:285px;width:40px;overflow:hidden;top:644px;font-size:10px;color:#262626;letter-spacing:0.2px">HBFD003</div><div class="t" style="left:288px;width:48px;text-align:right;top:644px;font-size:10px;color:#262626">€</div><div class="t" style="left:330px;width:53px;text-align:right;top:644px;font-size:10px;color:#262626;letter-spacing:0.1px">33,74</div><div class="t" style="left:442px;top:644px;font-size:10px;color:#262626">€</div><div class="t" style="left:513px;top:644px;font-size:10px;color:#262626">€</div><div class="t" style="left:576px;top:644px;font-size:10px;color:#262626">€</div><div class="t" style="left:587px;top:644px;font-size:10px;color:#262626;letter-spacing:0.2px">33,74</div><div class="t" style="left:640px;top:644px;font-size:10px;color:#262626">€</div>
<div class="a" style="left:10px;top:657px;width:637px;height:20px;background:#ddd0b9"></div><div class="a" style="left:79px;top:657px;width:1px;height:20px;background:#d6c9b2"></div><div class="a" style="left:124px;top:657px;width:1px;height:20px;background:#d6c9b2"></div><div class="a" style="left:161px;top:657px;width:1px;height:20px;background:#d6c9b2"></div><div class="a" style="left:282px;top:657px;width:1px;height:20px;background:#d6c9b2"></div><div class="a" style="left:328px;top:657px;width:1px;height:20px;background:#d6c9b2"></div><div class="a" style="left:385px;top:657px;width:1px;height:20px;background:#d6c9b2"></div><div class="a" style="left:449px;top:657px;width:1px;height:20px;background:#d6c9b2"></div><div class="a" style="left:520px;top:657px;width:1px;height:20px;background:#d6c9b2"></div><div class="a" style="left:584px;top:657px;width:1px;height:20px;background:#d6c9b2"></div><div class="t" style="left:18px;top:664px;font-size:10px;letter-spacing:0.25px;color:#262626">11/06/2014</div><div class="t" style="left:79px;width:45px;text-align:center;top:664px;font-size:10px;color:#262626">11</div><div class="t" style="left:124px;width:22px;text-align:right;top:664px;font-size:10px;color:#262626">1</div><div class="t" style="left:164px;width:118px;overflow:hidden;top:664px;font-size:10px;color:#262626;letter-spacing:0.35px">radios sur 1 à 3 dents cc</div><div class="t" style="left:285px;width:40px;overflow:hidden;top:664px;font-size:10px;color:#262626;letter-spacing:0.2px">HBQK389</div><div class="t" style="left:288px;width:48px;text-align:right;top:664px;font-size:10px;color:#262626">€</div><div class="t" style="left:330px;width:53px;text-align:right;top:664px;font-size:10px;color:#262626;letter-spacing:0.1px">15,96</div><div class="t" style="left:442px;top:664px;font-size:10px;color:#262626">€</div><div class="t" style="left:513px;top:664px;font-size:10px;color:#262626">€</div><div class="t" style="left:576px;top:664px;font-size:10px;color:#262626">€</div><div class="t" style="left:587px;top:664px;font-size:10px;color:#262626;letter-spacing:0.2px">15,96</div><div class="t" style="left:640px;top:664px;font-size:10px;color:#262626">€</div>
<div class="a" style="left:10px;top:677px;width:637px;height:20px;background:#fefdfb"></div><div class="a" style="left:79px;top:677px;width:1px;height:20px;background:#f2eee8"></div><div class="a" style="left:124px;top:677px;width:1px;height:20px;background:#f2eee8"></div><div class="a" style="left:161px;top:677px;width:1px;height:20px;background:#f2eee8"></div><div class="a" style="left:282px;top:677px;width:1px;height:20px;background:#f2eee8"></div><div class="a" style="left:328px;top:677px;width:1px;height:20px;background:#f2eee8"></div><div class="a" style="left:385px;top:677px;width:1px;height:20px;background:#f2eee8"></div><div class="a" style="left:449px;top:677px;width:1px;height:20px;background:#f2eee8"></div><div class="a" style="left:520px;top:677px;width:1px;height:20px;background:#f2eee8"></div><div class="a" style="left:584px;top:677px;width:1px;height:20px;background:#f2eee8"></div><div class="t" style="left:23px;top:684px;font-size:10px;letter-spacing:0.25px;color:#262626">1/06/2014</div><div class="t" style="left:79px;width:45px;text-align:center;top:684px;font-size:10px;color:#262626">25-27</div><div class="t" style="left:124px;width:22px;text-align:right;top:684px;font-size:10px;color:#262626">1</div><div class="t" style="left:164px;width:118px;overflow:hidden;top:684px;font-size:10px;color:#262626;letter-spacing:0.35px">bridge de 2 piliers ancr n</div><div class="t" style="left:285px;width:40px;overflow:hidden;top:684px;font-size:10px;color:#e8204a;letter-spacing:0.2px">HBLD035</div><div class="t" style="left:288px;width:48px;text-align:right;top:684px;font-size:10px;color:#e8204a">€</div><div class="t" style="left:330px;width:53px;text-align:right;top:684px;font-size:10px;color:#e8204a;letter-spacing:0.1px">279,50</div><div class="t" style="left:442px;top:684px;font-size:10px;color:#262626">€</div><div class="t" style="left:513px;top:684px;font-size:10px;color:#262626">€</div><div class="t" style="left:576px;top:684px;font-size:10px;color:#262626">€</div><div class="t" style="left:587px;top:684px;font-size:10px;color:#262626;letter-spacing:0.2px">279,50</div><div class="t" style="left:640px;top:684px;font-size:10px;color:#262626">€</div>
<div class="a" style="left:10px;top:697px;width:637px;height:20px;background:#ddd0b9"></div><div class="a" style="left:79px;top:697px;width:1px;height:20px;background:#d6c9b2"></div><div class="a" style="left:124px;top:697px;width:1px;height:20px;background:#d6c9b2"></div><div class="a" style="left:161px;top:697px;width:1px;height:20px;background:#d6c9b2"></div><div class="a" style="left:282px;top:697px;width:1px;height:20px;background:#d6c9b2"></div><div class="a" style="left:328px;top:697px;width:1px;height:20px;background:#d6c9b2"></div><div class="a" style="left:385px;top:697px;width:1px;height:20px;background:#d6c9b2"></div><div class="a" style="left:449px;top:697px;width:1px;height:20px;background:#d6c9b2"></div><div class="a" style="left:520px;top:697px;width:1px;height:20px;background:#d6c9b2"></div><div class="a" style="left:584px;top:697px;width:1px;height:20px;background:#d6c9b2"></div><div class="t" style="left:18px;top:704px;font-size:10px;letter-spacing:0.25px;color:#262626">11/06/2014</div><div class="t" style="left:79px;width:45px;text-align:center;top:704px;font-size:10px;color:#262626">24</div><div class="t" style="left:124px;width:22px;text-align:right;top:704px;font-size:10px;color:#262626">1</div><div class="t" style="left:164px;width:118px;overflow:hidden;top:704px;font-size:10px;color:#262626;letter-spacing:0.35px">adjonction 1 pilier ancr c</div><div class="t" style="left:285px;width:40px;overflow:hidden;top:704px;font-size:10px;color:#e8204a;letter-spacing:0.2px">HBMD008</div><div class="t" style="left:288px;width:48px;text-align:right;top:704px;font-size:10px;color:#e8204a">€</div><div class="t" style="left:330px;width:53px;text-align:right;top:704px;font-size:10px;color:#e8204a;letter-spacing:0.1px">107,50</div><div class="t" style="left:442px;top:704px;font-size:10px;color:#262626">€</div><div class="t" style="left:513px;top:704px;font-size:10px;color:#262626">€</div><div class="t" style="left:576px;top:704px;font-size:10px;color:#262626">€</div><div class="t" style="left:587px;top:704px;font-size:10px;color:#262626;letter-spacing:0.2px">107,50</div><div class="t" style="left:640px;top:704px;font-size:10px;color:#262626">€</div>
<div class="a" style="left:10px;top:717px;width:637px;height:20px;background:#fefdfb"></div><div class="a" style="left:79px;top:717px;width:1px;height:20px;background:#f2eee8"></div><div class="a" style="left:124px;top:717px;width:1px;height:20px;background:#f2eee8"></div><div class="a" style="left:161px;top:717px;width:1px;height:20px;background:#f2eee8"></div><div class="a" style="left:282px;top:717px;width:1px;height:20px;background:#f2eee8"></div><div class="a" style="left:328px;top:717px;width:1px;height:20px;background:#f2eee8"></div><div class="a" style="left:385px;top:717px;width:1px;height:20px;background:#f2eee8"></div><div class="a" style="left:449px;top:717px;width:1px;height:20px;background:#f2eee8"></div><div class="a" style="left:520px;top:717px;width:1px;height:20px;background:#f2eee8"></div><div class="a" style="left:584px;top:717px;width:1px;height:20px;background:#f2eee8"></div><div class="t" style="left:18px;top:724px;font-size:10px;letter-spacing:0.25px;color:#262626">11/06/2014</div><div class="t" style="left:79px;width:45px;text-align:center;top:724px;font-size:10px;color:#262626">16</div><div class="t" style="left:124px;width:22px;text-align:right;top:724px;font-size:10px;color:#262626">1</div><div class="t" style="left:164px;width:118px;overflow:hidden;top:724px;font-size:10px;color:#262626;letter-spacing:0.35px">avulsion d 1 dent permar</div><div class="t" style="left:285px;width:40px;overflow:hidden;top:724px;font-size:10px;color:#262626;letter-spacing:0.2px">HBGD039</div><div class="t" style="left:288px;width:48px;text-align:right;top:724px;font-size:10px;color:#262626">€</div><div class="t" style="left:330px;width:53px;text-align:right;top:724px;font-size:10px;color:#262626;letter-spacing:0.1px">33,44</div><div class="t" style="left:442px;top:724px;font-size:10px;color:#262626">€</div><div class="t" style="left:513px;top:724px;font-size:10px;color:#262626">€</div><div class="t" style="left:576px;top:724px;font-size:10px;color:#262626">€</div><div class="t" style="left:587px;top:724px;font-size:10px;color:#262626;letter-spacing:0.2px">33,44</div><div class="t" style="left:640px;top:724px;font-size:10px;color:#262626">€</div>
<div class="a" style="left:10px;top:737px;width:637px;height:20px;background:#ddd0b9"></div><div class="a" style="left:79px;top:737px;width:1px;height:20px;background:#d6c9b2"></div><div class="a" style="left:124px;top:737px;width:1px;height:20px;background:#d6c9b2"></div><div class="a" style="left:161px;top:737px;width:1px;height:20px;background:#d6c9b2"></div><div class="a" style="left:282px;top:737px;width:1px;height:20px;background:#d6c9b2"></div><div class="a" style="left:328px;top:737px;width:1px;height:20px;background:#d6c9b2"></div><div class="a" style="left:385px;top:737px;width:1px;height:20px;background:#d6c9b2"></div><div class="a" style="left:449px;top:737px;width:1px;height:20px;background:#d6c9b2"></div><div class="a" style="left:520px;top:737px;width:1px;height:20px;background:#d6c9b2"></div><div class="a" style="left:584px;top:737px;width:1px;height:20px;background:#d6c9b2"></div><div class="t" style="left:18px;top:744px;font-size:10px;letter-spacing:0.25px;color:#262626">11/06/2014</div><div class="t" style="left:79px;width:45px;text-align:center;top:744px;font-size:10px;color:#262626">16</div><div class="t" style="left:124px;width:22px;text-align:right;top:744px;font-size:10px;color:#262626">1</div><div class="t" style="left:164px;width:118px;overflow:hidden;top:744px;font-size:10px;color:#262626;letter-spacing:0.35px">radio 1 à 3 dents contig</div><div class="t" style="left:285px;width:40px;overflow:hidden;top:744px;font-size:10px;color:#262626;letter-spacing:0.2px">HBQK006</div><div class="t" style="left:288px;width:48px;text-align:right;top:744px;font-size:10px;color:#262626">€</div><div class="t" style="left:330px;width:53px;text-align:right;top:744px;font-size:10px;color:#262626;letter-spacing:0.1px">3,99</div><div class="t" style="left:442px;top:744px;font-size:10px;color:#262626">€</div><div class="t" style="left:513px;top:744px;font-size:10px;color:#262626">€</div><div class="t" style="left:576px;top:744px;font-size:10px;color:#262626">€</div><div class="t" style="left:587px;top:744px;font-size:10px;color:#262626;letter-spacing:0.2px">3,99</div><div class="t" style="left:640px;top:744px;font-size:10px;color:#262626">€</div>
<div class="a" style="left:10px;top:757px;width:637px;height:20px;background:#000"></div><div class="a" style="left:79px;top:757px;width:1px;height:20px;background:#555"></div><div class="a" style="left:124px;top:757px;width:1px;height:20px;background:#555"></div><div class="a" style="left:161px;top:757px;width:1px;height:20px;background:#555"></div><div class="a" style="left:282px;top:757px;width:1px;height:20px;background:#555"></div><div class="a" style="left:328px;top:757px;width:1px;height:20px;background:#555"></div><div class="a" style="left:385px;top:757px;width:1px;height:20px;background:#555"></div><div class="a" style="left:449px;top:757px;width:1px;height:20px;background:#555"></div><div class="a" style="left:520px;top:757px;width:1px;height:20px;background:#555"></div><div class="a" style="left:584px;top:757px;width:1px;height:20px;background:#555"></div><div class="t" style="left:18px;top:764px;font-size:10px;letter-spacing:0.25px;color:#e8e8e8">11/06/2014</div><div class="t" style="left:79px;width:45px;text-align:center;top:764px;font-size:10px;color:#e8e8e8">17-15</div><div class="t" style="left:124px;width:22px;text-align:right;top:764px;font-size:10px;color:#e8e8e8">1</div><div class="t" style="left:164px;width:118px;overflow:hidden;top:764px;font-size:10px;color:#e8e8e8;letter-spacing:0.35px">bridge de 2 piliers & 1 él</div><div class="t" style="left:285px;width:40px;overflow:hidden;top:764px;font-size:10px;color:#30c070;letter-spacing:0.2px">HBLD023</div><div class="t" style="left:288px;width:48px;text-align:right;top:764px;font-size:10px;color:#30c070">€</div><div class="t" style="left:330px;width:53px;text-align:right;top:764px;font-size:10px;color:#30c070;letter-spacing:0.1px">279,50</div><div class="t" style="left:442px;top:764px;font-size:10px;color:#e8e8e8">€</div><div class="t" style="left:513px;top:764px;font-size:10px;color:#e8e8e8">€</div><div class="t" style="left:576px;top:764px;font-size:10px;color:#e8e8e8">€</div><div class="t" style="left:587px;top:764px;font-size:10px;color:#e8e8e8;letter-spacing:0.2px">279,50</div><div class="t" style="left:640px;top:764px;font-size:10px;color:#e8e8e8">€</div>
<div class="a" style="left:647px;top:557px;width:15px;height:266px;background:#f0f0f0;border-left:1px solid #e4e4e4"></div>
<div class="a" style="left:649px;top:558px;width:12px;height:13px;background:linear-gradient(#f4f4f4,#dcdcdc);border:1px solid #d0d0d0"></div>
<div class="a" style="left:649px;top:810px;width:12px;height:12px;background:linear-gradient(#f4f4f4,#dcdcdc);border:1px solid #d0d0d0"></div>
<!-- bottom inputs -->
<div class="a" style="left:10px;top:828px;width:74px;height:19px;background:#fff;border:1px solid #9a9a9a;border-right-color:#e0e0e0;border-bottom-color:#e0e0e0;box-shadow:inset 1px 1px 0 #c8c8c8"></div>
<div class="t" style="left:12px;top:831px;font-size:11px;font-weight:bold;color:#222;letter-spacing:0.5px">09/06/2014</div>
<div class="a" style="left:86px;top:828px;width:34px;height:19px;background:#fff;border:1px solid #9a9a9a;box-shadow:inset 1px 1px 0 #c8c8c8"></div>
<div class="t" style="left:89px;top:832px;font-size:10px;font-weight:bold;color:#222">1</div>
<div class="a" style="left:106px;top:830px;width:13px;height:15px;background:linear-gradient(#f0f0f0,#c8c8c8)"></div>
<div class="t" style="left:109px;top:832px;font-size:8px;color:#222">▾</div>
<div class="a" style="left:122px;top:828px;width:55px;height:19px;background:#fff;border:1px solid #9a9a9a;box-shadow:inset 1px 1px 0 #c8c8c8"></div>
<div class="t" style="left:124px;top:831px;font-size:11px;font-weight:bold;color:#222;letter-spacing:0px">47</div>
<div class="a" style="left:177px;top:828px;width:18px;height:19px;background:linear-gradient(#e8e8e8,#c0c0c0)"></div>
<div class="t" style="left:178px;top:829px;font-size:13px;font-weight:bold;color:#333">ꝏ</div>
<div class="a" style="left:196px;top:828px;width:75px;height:19px;background:#fff;border:1px solid #9a9a9a;box-shadow:inset 1px 1px 0 #c8c8c8"></div>
<div class="t" style="left:198px;top:831px;font-size:11px;font-weight:bold;color:#222;letter-spacing:0.35px">HBFD008</div>
<div class="a" style="left:274px;top:829px;width:47px;height:17px;background:#e01414;border:1px solid #b01010"></div>
<div class="t" style="left:289px;top:832px;font-size:9px;color:#901010">10</div>
<div class="a" style="left:323px;top:828px;width:73px;height:19px;background:#fff;border:1px solid #9a9a9a;box-shadow:inset 1px 1px 0 #c8c8c8"></div>
<div class="t" style="left:325px;top:831px;font-size:11px;font-weight:bold;color:#222;letter-spacing:0.3px">101.00</div>
<div class="a" style="left:398px;top:827px;width:19px;height:21px;background:linear-gradient(135deg,#c8b040,#40a030 50%,#208020)"></div>
<div class="a" style="left:417px;top:827px;width:241px;height:21px;background:#fff;border:1px solid #b0b0b0;border-top:2px solid #999;box-shadow:inset 1px 1px 0 #ddd"></div>
<div class="t" style="left:419px;top:830px;font-size:10.5px;font-weight:bold;color:#222;letter-spacing:0.05px">gjkfkgfkfkgfgkl</div>
<div class="a" style="left:542px;top:831px;width:1px;height:12px;background:#bbb"></div>
<div class="a" style="left:638px;top:843px;width:14px;height:3px;background:#e8d8a0"></div>

<div class="a" style="left:680px;top:141px;width:1px;height:715px;background:#dfe6ec"></div>
<!-- ============ RIGHT: patients panel ============ -->
<div class="a" style="left:690px;top:145px;width:906px;height:197px;background:#5c5c5c;border:2px solid #2e2e2e;border-radius:5px;box-shadow:0 1px 2px rgba(0,0,0,.35)"></div>
<div class="a" style="left:692px;top:147px;width:902px;height:19px;background:linear-gradient(#6a6a6a 0,#3a3a3a 40%,#141414 100%);border-radius:3px 3px 0 0"></div>
<svg class="a" style="left:697px;top:151px" width="10" height="10"><path d="M5 1 L8 5 L6 5 L6 9 L4 9 L4 5 L2 5 Z" fill="#7a7a7a"/></svg>
<div class="a" style="left:1190px;top:149px;width:51px;height:16px;background:linear-gradient(#9a9a9a,#6e6e6e);border-radius:3px 3px 0 0;border:1px solid #555"></div><div class="t" style="left:1190px;width:51px;text-align:center;top:152px;font-size:9px;font-weight:bold;color:#f4f4f4;font-family:'Liberation Serif',serif">Patients</div><div class="a" style="left:1243px;top:149px;width:72px;height:16px;background:linear-gradient(#cfcfcf,#9c9c9c);border-radius:3px 3px 0 0;border:1px solid #555"></div><div class="t" style="left:1243px;width:72px;text-align:center;top:152px;font-size:9px;font-weight:bold;color:#f4f4f4;font-family:'Liberation Serif',serif">Infos du jour</div><div class="a" style="left:1317px;top:149px;width:82px;height:16px;background:linear-gradient(#cfcfcf,#9c9c9c);border-radius:3px 3px 0 0;border:1px solid #555"></div><div class="t" style="left:1317px;width:82px;text-align:center;top:152px;font-size:9px;font-weight:bold;color:#f4f4f4;font-family:'Liberation Serif',serif">Salle d'attente</div><div class="a" style="left:1401px;top:149px;width:52px;height:16px;background:linear-gradient(#cfcfcf,#9c9c9c);border-radius:3px 3px 0 0;border:1px solid #555"></div><div class="t" style="left:1401px;width:52px;text-align:center;top:152px;font-size:9px;font-weight:bold;color:#f4f4f4;font-family:'Liberation Serif',serif">Fauteuil</div><div class="a" style="left:1455px;top:149px;width:51px;height:16px;background:linear-gradient(#cfcfcf,#9c9c9c);border-radius:3px 3px 0 0;border:1px solid #555"></div><div class="t" style="left:1455px;width:51px;text-align:center;top:152px;font-size:9px;font-weight:bold;color:#f4f4f4;font-family:'Liberation Serif',serif">Agenda</div><div class="a" style="left:1508px;top:149px;width:82px;height:16px;background:linear-gradient(#cfcfcf,#9c9c9c);border-radius:3px 3px 0 0;border:1px solid #555"></div><div class="t" style="left:1508px;width:82px;text-align:center;top:152px;font-size:9px;font-weight:bold;color:#f4f4f4;font-family:'Liberation Serif',serif">Tâches du jour</div>
<div class="a" style="left:692px;top:166px;width:902px;height:174px;background:#606060"></div>
<div class="a" style="left:695px;top:170px;width:895px;height:19px;background:linear-gradient(#fbf8f9,#ebe3e6 50%,#d8ced2);border-radius:4px;border:1px solid #3a3a3a"></div>
<div class="a" style="left:695px;top:191px;width:20px;height:21px;background:linear-gradient(#7a7a7a,#5a5a5a)"></div>
<svg class="a" style="left:697px;top:194px" width="16" height="15"><circle cx="6.5" cy="6.5" r="4.5" fill="none" stroke="#eee" stroke-width="2"/><path d="M10 10 L14 14" stroke="#eee" stroke-width="2.5"/></svg>
<div class="a" style="left:716px;top:191px;width:83px;height:21px;background:#fff"></div>
<div class="a" style="left:802px;top:191px;width:261px;height:21px;background:#fff"></div>
<div class="a" style="left:1065px;top:191px;width:192px;height:21px;background:#fff"></div>
<div class="a" style="left:1259px;top:191px;width:157px;height:21px;background:#fff"></div>
<div class="a" style="left:1416px;top:192px;width:19px;height:19px;background:radial-gradient(#9a9a9a,#cfcfcf);border-radius:2px"></div>
<div class="a" style="left:1421px;top:197px;width:9px;height:8px;border-radius:0 0 4px 4px;background:#1a1a1a"></div>
<div class="a" style="left:1436px;top:191px;width:138px;height:21px;background:#fff"></div>
<div class="a" style="left:695px;top:214px;width:895px;height:16px;background:linear-gradient(#7c7c7c,#5a5a5a);border-top:1px solid #444"></div>
<div class="t" style="left:697px;top:217px;font-size:8.5px;color:#d0d0d0">Dossier</div>
<div class="a" style="left:789px;top:216px;width:6px;height:9px;border-radius:50% 50% 50% 50%;background:linear-gradient(#7ae0f8,#20a8d8)"></div>
<div class="t" style="left:803px;top:217px;font-size:8.5px;color:#d0d0d0">Nom</div>
<div class="t" style="left:1067px;top:217px;font-size:8.5px;color:#d0d0d0">Prénom</div>
<div class="t" style="left:1261px;top:217px;font-size:8.5px;color:#d0d0d0">Téléphone</div>
<div class="t" style="left:1438px;top:217px;font-size:8.5px;color:#d0d0d0">Date de naissance</div>
<div class="a" style="left:800px;top:214px;width:1px;height:16px;background:#8a8a8a"></div>
<div class="a" style="left:1064px;top:214px;width:1px;height:16px;background:#8a8a8a"></div>
<div class="a" style="left:1258px;top:214px;width:1px;height:16px;background:#8a8a8a"></div>
<div class="a" style="left:1435px;top:214px;width:1px;height:16px;background:#8a8a8a"></div>
<div class="a" style="left:695px;top:230px;width:882px;height:15px;background:#fdfbf8"></div><div class="a" style="left:800px;top:230px;width:1px;height:15px;background:#ebe6de"></div><div class="a" style="left:1064px;top:230px;width:1px;height:15px;background:#ebe6de"></div><div class="a" style="left:1258px;top:230px;width:1px;height:15px;background:#ebe6de"></div><div class="a" style="left:1435px;top:230px;width:1px;height:15px;background:#ebe6de"></div><div class="t" style="left:760px;width:39px;text-align:right;top:233px;font-size:10.5px;color:#262626;letter-spacing:0.25px;">237</div><div class="t" style="left:803px;top:233px;font-size:10.5px;color:#262626;letter-spacing:0.25px;">DI KARTINO</div><div class="t" style="left:1067px;top:233px;font-size:10.5px;color:#262626;letter-spacing:0.25px;">FLORENCE</div><div class="t" style="left:1260px;top:233px;font-size:10.5px;color:#262626;letter-spacing:0.25px;"></div><div class="t" style="left:1437px;top:233px;font-size:10.5px;color:#262626;letter-spacing:0.25px;"></div><div class="a" style="left:695px;top:245px;width:882px;height:15px;background:#dccfb8"></div><div class="a" style="left:800px;top:245px;width:1px;height:15px;background:#d0c2a8"></div><div class="a" style="left:1064px;top:245px;width:1px;height:15px;background:#d0c2a8"></div><div class="a" style="left:1258px;top:245px;width:1px;height:15px;background:#d0c2a8"></div><div class="a" style="left:1435px;top:245px;width:1px;height:15px;background:#d0c2a8"></div><div class="t" style="left:760px;width:39px;text-align:right;top:248px;font-size:10.5px;color:#262626;letter-spacing:0.25px;">234</div><div class="t" style="left:803px;top:248px;font-size:10.5px;color:#262626;letter-spacing:0.25px;">DERO</div><div class="t" style="left:1067px;top:248px;font-size:10.5px;color:#262626;letter-spacing:0.25px;">PHILIPPE</div><div class="t" style="left:1260px;top:248px;font-size:10.5px;color:#262626;letter-spacing:0.25px;"></div><div class="t" style="left:1437px;top:248px;font-size:10.5px;color:#262626;letter-spacing:0.25px;"></div><div class="a" style="left:695px;top:260px;width:882px;height:15px;background:#fdfbf8"></div><div class="a" style="left:800px;top:260px;width:1px;height:15px;background:#ebe6de"></div><div class="a" style="left:1064px;top:260px;width:1px;height:15px;background:#ebe6de"></div><div class="a" style="left:1258px;top:260px;width:1px;height:15px;background:#ebe6de"></div><div class="a" style="left:1435px;top:260px;width:1px;height:15px;background:#ebe6de"></div><div class="t" style="left:760px;width:39px;text-align:right;top:263px;font-size:10.5px;color:#262626;letter-spacing:0.25px;">233</div><div class="t" style="left:803px;top:263px;font-size:10.5px;color:#262626;letter-spacing:0.25px;">DUPRE</div><div class="t" style="left:1067px;top:263px;font-size:10.5px;color:#262626;letter-spacing:0.25px;">CAROLINE</div><div class="t" style="left:1260px;top:263px;font-size:10.5px;color:#262626;letter-spacing:0.25px;"></div><div class="t" style="left:1437px;top:263px;font-size:10.5px;color:#262626;letter-spacing:0.25px;"></div><div class="a" style="left:695px;top:275px;width:882px;height:15px;background:#dccfb8"></div><div class="a" style="left:800px;top:275px;width:1px;height:15px;background:#d0c2a8"></div><div class="a" style="left:1064px;top:275px;width:1px;height:15px;background:#d0c2a8"></div><div class="a" style="left:1258px;top:275px;width:1px;height:15px;background:#d0c2a8"></div><div class="a" style="left:1435px;top:275px;width:1px;height:15px;background:#d0c2a8"></div><div class="t" style="left:760px;width:39px;text-align:right;top:278px;font-size:10.5px;color:#262626;letter-spacing:0.25px;">232</div><div class="t" style="left:803px;top:278px;font-size:10.5px;color:#262626;letter-spacing:0.25px;">NI</div><div class="t" style="left:1067px;top:278px;font-size:10.5px;color:#262626;letter-spacing:0.25px;">OMALI</div><div class="t" style="left:1260px;top:278px;font-size:10.5px;color:#262626;letter-spacing:0.25px;"></div><div class="t" style="left:1437px;top:278px;font-size:10.5px;color:#262626;letter-spacing:0.25px;"></div><div class="a" style="left:695px;top:290px;width:882px;height:15px;background:#fdfbf8"></div><div class="a" style="left:800px;top:290px;width:1px;height:15px;background:#ebe6de"></div><div class="a" style="left:1064px;top:290px;width:1px;height:15px;background:#ebe6de"></div><div class="a" style="left:1258px;top:290px;width:1px;height:15px;background:#ebe6de"></div><div class="a" style="left:1435px;top:290px;width:1px;height:15px;background:#ebe6de"></div><div class="t" style="left:760px;width:39px;text-align:right;top:293px;font-size:10.5px;color:#262626;letter-spacing:0.25px;">231</div><div class="t" style="left:803px;top:293px;font-size:10.5px;color:#262626;letter-spacing:0.25px;">MARCQ</div><div class="t" style="left:1067px;top:293px;font-size:10.5px;color:#262626;letter-spacing:0.25px;">CORINNE</div><div class="t" style="left:1260px;top:293px;font-size:10.5px;color:#262626;letter-spacing:0.25px;">42.40.13.54</div><div class="t" style="left:1437px;top:293px;font-size:10.5px;color:#262626;letter-spacing:0.25px;"></div><div class="a" style="left:695px;top:305px;width:882px;height:15px;background:#dccfb8"></div><div class="a" style="left:800px;top:305px;width:1px;height:15px;background:#d0c2a8"></div><div class="a" style="left:1064px;top:305px;width:1px;height:15px;background:#d0c2a8"></div><div class="a" style="left:1258px;top:305px;width:1px;height:15px;background:#d0c2a8"></div><div class="a" style="left:1435px;top:305px;width:1px;height:15px;background:#d0c2a8"></div><div class="t" style="left:760px;width:39px;text-align:right;top:308px;font-size:10.5px;color:#262626;letter-spacing:0.25px;">230</div><div class="t" style="left:803px;top:308px;font-size:10.5px;color:#262626;letter-spacing:0.25px;">SANKO</div><div class="t" style="left:1067px;top:308px;font-size:10.5px;color:#262626;letter-spacing:0.25px;">GEORGELINE</div><div class="t" style="left:1260px;top:308px;font-size:10.5px;color:#262626;letter-spacing:0.25px;">01.40.34.76.48</div><div class="t" style="left:1437px;top:308px;font-size:10.5px;color:#262626;letter-spacing:0.25px;">28/01/1976</div><div class="a" style="left:695px;top:320px;width:882px;height:15px;background:#fdfbf8"></div><div class="a" style="left:800px;top:320px;width:1px;height:15px;background:#ebe6de"></div><div class="a" style="left:1064px;top:320px;width:1px;height:15px;background:#ebe6de"></div><div class="a" style="left:1258px;top:320px;width:1px;height:15px;background:#ebe6de"></div><div class="a" style="left:1435px;top:320px;width:1px;height:15px;background:#ebe6de"></div><div class="t" style="left:760px;width:39px;text-align:right;top:323px;font-size:10.5px;color:#262626;letter-spacing:0.25px;">229</div><div class="t" style="left:803px;top:323px;font-size:10.5px;color:#262626;letter-spacing:0.25px;">COMPAIN</div><div class="t" style="left:1067px;top:323px;font-size:10.5px;color:#262626;letter-spacing:0.25px;">DANIEL</div><div class="t" style="left:1260px;top:323px;font-size:10.5px;color:#262626;letter-spacing:0.25px;"></div><div class="t" style="left:1437px;top:323px;font-size:10.5px;color:#262626;letter-spacing:0.25px;"></div>
<div class="a" style="left:695px;top:335px;width:895px;height:3px;background:#5e5e5e"></div>
<div class="a" style="left:1577px;top:230px;width:13px;height:106px;background:#ececec"></div>
<div class="a" style="left:1577px;top:230px;width:13px;height:13px;background:linear-gradient(#fafafa,#dedede);border:1px solid #c8c8c8"></div>
<div class="t" style="left:1580px;top:232px;font-size:7px;color:#222">▲</div>
<div class="a" style="left:1577px;top:243px;width:13px;height:6px;background:#d8d8d8;border:1px solid #c0c0c0"></div>
<div class="a" style="left:1577px;top:323px;width:13px;height:13px;background:linear-gradient(#fafafa,#dedede);border:1px solid #c8c8c8"></div>
<div class="t" style="left:1580px;top:326px;font-size:7px;color:#222">▼</div>
<div class="a" style="left:696px;top:268px;width:12px;height:30px;background:linear-gradient(90deg,#d8d8d8,#f0f0f0);border-radius:3px 0 0 3px"></div>
<div class="a" style="left:701px;top:280px;width:2px;height:5px;background:#fff"></div>

<!-- ============ RIGHT: xray panel ============ -->
<div class="a" style="left:690px;top:350px;width:906px;height:250px;background:linear-gradient(#737373,#6a6a6a);border:1px solid #505050;border-radius:5px;box-shadow:0 1px 2px rgba(0,0,0,.3)"></div>
<div class="a" style="left:700px;top:360px;width:423px;height:5px;background:linear-gradient(#dcdcdc,#bdbdbd);border-radius:3px"></div>
<div class="a" style="left:1123px;top:361px;width:425px;height:4px;background:#666;border-radius:2px"></div>
<div class="a" style="left:908px;top:361px;width:2px;height:4px;background:#999"></div>
<div class="a" style="left:1553px;top:357px;width:17px;height:13px;background:linear-gradient(#e8e8e8,#b0b0b0);border-radius:2px"></div>
<div class="a" style="left:1572px;top:357px;width:17px;height:13px;background:linear-gradient(#e8e8e8,#b0b0b0);border-radius:2px"></div>
<svg class="a" style="left:1557px;top:359px" width="10" height="9"><path d="M8 0 L8 9 L1 4.5 Z" fill="#111"/></svg>
<svg class="a" style="left:1577px;top:359px" width="10" height="9"><path d="M1 0 L8 4.5 L1 9 Z" fill="#111"/></svg>
<div class="a" style="left:696px;top:374px;width:894px;height:202px;background:#000;border:2px solid #e8e8e8"></div>
<div class="a" style="left:961px;top:376px;width:364px;height:198px;overflow:hidden;background:#c8c8c8">
<svg width="364" height="198" viewBox="0 0 364 198"><defs>
<filter id="pb" x="-5%" y="-5%" width="110%" height="110%"><feGaussianBlur stdDeviation="3.5"/></filter>
<filter id="pb1" x="-5%" y="-5%" width="110%" height="110%"><feGaussianBlur stdDeviation="1.6"/></filter>
<filter id="pb2"><feGaussianBlur stdDeviation="0.7"/></filter></defs>
<rect width="364" height="198" fill="#a0a0a0"/>
<g filter="url(#pb)">
<rect x="0" y="0" width="364" height="198" fill="#9a9a9a"/>
<rect x="0" y="0" width="40" height="198" fill="#d8d8d8"/>
<rect x="325" y="0" width="39" height="198" fill="#d8d8d8"/>
<rect x="0" y="0" width="364" height="14" fill="#dcdcdc"/>
<!-- upper skull dark areas -->
<path d="M50 30 Q80 15 120 25 L125 60 Q90 70 60 60Z" fill="#5a5a5a"/>
<path d="M130 20 Q150 15 165 25 L160 55 L135 55Z" fill="#6a6a6a"/>
<path d="M168 15 Q185 10 200 18 L205 55 Q185 62 168 55Z" fill="#404040"/>
<path d="M210 20 Q240 12 275 25 L270 58 Q240 64 212 55Z" fill="#555"/>
<path d="M280 35 Q310 30 330 55 L320 80 Q295 75 280 60Z" fill="#5e5e5e"/>
<!-- light patches upper -->
<ellipse cx="125" cy="40" rx="10" ry="22" fill="#c8c8c8"/>
<ellipse cx="275" cy="40" rx="12" ry="20" fill="#c0c0c0"/>
<!-- condyles & ramus -->
<ellipse cx="42" cy="70" rx="13" ry="20" fill="#b8b8b8"/>
<path d="M30 55 Q25 120 55 185" stroke="#626262" stroke-width="16" fill="none"/>
<ellipse cx="338" cy="78" rx="12" ry="18" fill="#b8b8b8"/>
<path d="M345 70 Q345 130 315 185" stroke="#626262" stroke-width="16" fill="none"/>
<!-- palate ridge -->
<path d="M80 62 Q182 48 290 62" stroke="#c4c4c4" stroke-width="9" fill="none"/>
<!-- mandible U band -->
<path d="M62 90 Q70 150 125 168 Q182 188 240 168 Q300 150 310 90" stroke="#c4c4c4" stroke-width="24" fill="none"/>
<!-- mouth interior -->
<ellipse cx="185" cy="100" rx="95" ry="34" fill="#585858"/>
<ellipse cx="215" cy="105" rx="30" ry="20" fill="#4a4a4a"/>
<ellipse cx="265" cy="110" rx="22" ry="22" fill="#505050"/>
<!-- lower dark corners -->
<ellipse cx="90" cy="172" rx="42" ry="24" fill="#4e4e4e"/>
<ellipse cx="280" cy="172" rx="42" ry="24" fill="#4e4e4e"/>
<!-- roots zone -->
<rect x="140" y="126" width="100" height="38" fill="#8c8c8c"/>
<rect x="125" y="180" width="120" height="18" fill="#c8c8c8"/>
</g>
<g filter="url(#pb1)">
<path d="M15 20 Q25 60 15 120 Q20 160 10 190" stroke="#eeeeee" stroke-width="8" fill="none"/>
<path d="M350 20 Q340 60 352 120 Q345 160 355 190" stroke="#eeeeee" stroke-width="8" fill="none"/>
<path d="M60 20 Q100 10 150 18" stroke="#e4e4e4" stroke-width="3" fill="none"/>
<path d="M215 18 Q260 10 310 22" stroke="#e4e4e4" stroke-width="3" fill="none"/>
<path d="M35 55 Q50 48 58 70" stroke="#3a3a3a" stroke-width="3" fill="none"/>
<path d="M335 62 Q325 55 318 78" stroke="#3a3a3a" stroke-width="3" fill="none"/>
</g>
<g filter="url(#pb2)" fill="#f8f8f8">
<rect x="135" y="70" width="6" height="22" rx="2" transform="rotate(-8 138 80)"/>
<rect x="146" y="68" width="6" height="24" rx="2" transform="rotate(-5 149 80)"/>
<rect x="165" y="62" width="6" height="28" rx="2" transform="rotate(-8 168 76)"/>
<rect x="177" y="62" width="6" height="28" rx="2"/>
<rect x="190" y="65" width="6" height="26" rx="2"/>
<rect x="205" y="66" width="6" height="25" rx="2"/>
<rect x="220" y="68" width="6" height="24" rx="2"/>
<rect x="255" y="76" width="9" height="24" rx="3" transform="rotate(10 259 88)"/>
<path d="M97 112 Q110 128 130 126 Q150 128 168 122 L168 134 Q150 138 130 136 Q110 138 95 122Z"/>
<path d="M210 122 Q225 116 240 122 L240 134 Q225 138 210 134Z"/>
<path d="M248 118 Q258 112 268 118 L268 130 Q258 134 248 130Z"/>
</g>
<g filter="url(#pb2)" fill="#b0b0b0" opacity=".8">
<rect x="145" y="132" width="4" height="28"/><rect x="156" y="132" width="4" height="30"/><rect x="172" y="128" width="4" height="32"/><rect x="186" y="128" width="4" height="32"/><rect x="200" y="128" width="4" height="32"/><rect x="216" y="134" width="4" height="28"/><rect x="226" y="134" width="4" height="28"/>
</g>
<rect x="186" y="120" width="22" height="40" fill="none" stroke="#9a9a9a" stroke-width="2" opacity=".6" filter="url(#pb2)"/>
</svg>
</div>
<div class="a" style="left:962px;top:545px;width:19px;height:25px;background:#000;border:1px solid #fff"></div>
<div class="t" style="left:965px;top:548px;font-size:14px;font-weight:bold;color:#fff">R</div>
<div class="a" style="left:963px;top:567px;width:16px;height:1px;background:#fff"></div>
<div class="t" style="left:703px;top:563px;font-size:7.5px;color:#ddd;letter-spacing:0.2px">30/04/2014</div>
<div class="t" style="left:1563px;top:563px;font-size:8px;color:#ccc">[1/2]</div>
<div class="a" style="left:698px;top:581px;width:22px;height:14px;background:linear-gradient(#f0f0f0,#b8b8b8);border-radius:2px"></div>
<div class="a" style="left:702px;top:585px;width:14px;height:2px;background:#777"></div>
<div class="a" style="left:702px;top:589px;width:14px;height:2px;background:#777"></div>
<div class="a" style="left:728px;top:589px;width:45px;height:3px;border-radius:1px;background:#3a48c8"></div>
<div class="a" style="left:781px;top:580px;width:25px;height:16px;background:linear-gradient(#e4e4e4,#a8a8a8);border-radius:2px"></div>
<svg class="a" style="left:783px;top:582px" width="21" height="13"><path d="M2 12 Q10 -2 19 12" fill="none" stroke="#fff" stroke-width="2"/></svg>
<div class="t" style="left:810px;top:585px;font-size:8px;color:#1a1a1a">Schéma</div>
<div class="a" style="left:848px;top:580px;width:25px;height:16px;background:linear-gradient(#e4e4e4,#a8a8a8);border-radius:2px"></div>
<div class="a" style="left:853px;top:583px;width:14px;height:9px;background:#fff"></div>
<div class="t" style="left:877px;top:585px;font-size:8px;color:#1a1a1a">Parodontologie</div>
<!-- ============ RIGHT: teeth panel ============ -->
<div class="a" style="left:690px;top:607px;width:906px;height:233px;background:#e2e2e2;border:4px solid #4a4a4a;border-top:3px solid #3a3a3a;border-radius:4px;box-shadow:0 1px 2px rgba(0,0,0,.3)"></div>
<div class="a" style="left:697px;top:706px;width:13px;height:32px;background:linear-gradient(90deg,#c8c8c8,#f4f4f4);border-radius:3px 0 0 3px"></div>
<div class="a" style="left:702px;top:719px;width:3px;height:5px;background:#fff"></div>
<div class="t" style="left:1456px;top:610px;font-size:10px;font-weight:bold;color:#b81040;line-height:13.5px;letter-spacing:0.6px">Plan Actualisé<br>au 11/06/2014</div>
<!--TEETH--><svg class="a" style="left:0;top:0" width="1600" height="875" viewBox="0 0 1600 875">
<path d="M940,612 C942,640 950,662 977,664" fill="none" stroke="#d87898" stroke-width="1.6" stroke-dasharray="1.5,2.5"/>
<path d="M1348,612 C1346,640 1338,662 1311,664" fill="none" stroke="#d87898" stroke-width="1.6" stroke-dasharray="1.5,2.5"/>
<path d="M940,612 L1348,612" fill="none" stroke="#d87898" stroke-width="1" stroke-dasharray="1.5,2.5" opacity=".5"/>
<path d="M980,781 C955,782 942,805 940,834" fill="none" stroke="#d87898" stroke-width="1.6" stroke-dasharray="1.5,2.5"/>
<path d="M1306,781 C1331,782 1344,805 1347,834" fill="none" stroke="#d87898" stroke-width="1.6" stroke-dasharray="1.5,2.5"/>
<path d="M940,834 L1348,834" fill="none" stroke="#d87898" stroke-width="1" stroke-dasharray="1.5,2.5" opacity=".5"/>
<path d="M1144.5,680 L1144.5,755" stroke="#555" stroke-width="1" stroke-dasharray="3,2"/>
<path d="M1082,723 L1204,723" stroke="#555" stroke-width="1" stroke-dasharray="3,2"/>
<path d="M979.7,664.0 C979.0,646.0 982.2,632.0 985.4,632.0 C987.5,635.0 988.5,638.0 988.5,638.0 C988.5,638.0 989.5,632.0 992.7,633.0 C995.9,635.0 998.0,646.0 997.3,664.0 Z" fill="#f6f2e4" stroke="#5a5a52" stroke-width="1"/><path d="M984.3,658.0 C984.3,642.0 986.4,636.0 987.5,642.0 L987.5,654.0 Z" fill="none" stroke="#8a8a80" stroke-width=".8"/><path d="M978.0,662.0 C984.3,658.0 992.7,658.0 999.0,662.0 C1000.0,671.4 995.9,679.0 990.6,679.0 L988.5,677.0 L986.4,679.0 C981.1,679.0 977.0,671.4 978.0,662.0 Z" fill="#f6f2e4" stroke="#5a5a52" stroke-width="1"/><path d="M1001.3,667.0 C1000.6,647.5 1004.0,632.0 1007.4,632.0 C1009.6,635.0 1010.8,638.0 1010.8,638.0 C1010.8,638.0 1011.9,632.0 1015.2,633.0 C1018.6,635.0 1020.9,647.5 1020.2,667.0 Z" fill="#f6f2e4" stroke="#5a5a52" stroke-width="1"/><path d="M1006.2,661.0 C1006.2,642.0 1008.5,636.0 1009.6,642.0 L1009.6,657.0 Z" fill="none" stroke="#8a8a80" stroke-width=".8"/><path d="M999.5,665.0 C1006.2,661.0 1015.2,661.0 1022.0,665.0 C1023.0,675.0 1018.6,683.0 1013.0,683.0 L1010.8,681.0 L1008.5,683.0 C1002.9,683.0 998.5,675.0 999.5,665.0 Z" fill="#2ae4f0" stroke="#1aa8b8" stroke-width="1"/><rect x="1007.8" y="663.0" width="6" height="5" fill="#eeeee4" stroke="#666" stroke-width=".5"/><path d="M1052.0,667.0 C1051.6,642.6 1055.5,631.0 1059.3,629.0 C1063.2,631.0 1067.1,642.6 1066.7,667.0 Z" fill="#f6f2e4" stroke="#5a5a52" stroke-width="1"/><path d="M1049.7,665.0 C1055.5,661.0 1063.2,661.0 1069.0,665.0 C1070.0,677.4 1066.1,687.0 1061.3,687.0 L1059.3,685.0 L1057.4,687.0 C1052.6,687.0 1048.7,677.4 1049.7,665.0 Z" fill="#2ae4f0" stroke="#1aa8b8" stroke-width="1"/><rect x="1056.3" y="663.0" width="6" height="5" fill="#eeeee4" stroke="#666" stroke-width=".5"/><path d="M1070.9,664.0 C1070.6,638.7 1073.8,626.5 1077.0,624.5 C1080.2,626.5 1083.4,638.7 1083.1,664.0 Z" fill="#f6f2e4" stroke="#5a5a52" stroke-width="1"/><path d="M1069.0,662.0 C1073.8,658.0 1080.2,658.0 1085.0,662.0 C1086.0,673.2 1082.6,682.0 1078.6,682.0 L1077.0,680.0 L1075.4,682.0 C1071.4,682.0 1068.0,673.2 1069.0,662.0 Z" fill="#f6f2e4" stroke="#5a5a52" stroke-width="1"/><path d="M1087.2,664.0 C1086.9,631.2 1091.5,614.0 1095.3,612.0 C1099.0,614.0 1101.8,631.2 1101.5,664.0 Z" fill="#f6f2e4" stroke="#5a5a52" stroke-width="1"/><path d="M1085.0,662.0 C1090.6,658.0 1098.1,658.0 1103.7,662.0 C1104.7,672.0 1100.9,680.0 1096.2,680.0 L1094.3,678.0 L1092.5,680.0 C1087.8,680.0 1084.0,672.0 1085.0,662.0 Z" fill="#f6f2e4" stroke="#5a5a52" stroke-width="1"/><path d="M1105.9,662.0 C1105.5,634.0 1110.0,620.0 1113.6,618.0 C1117.2,620.0 1119.9,634.0 1119.5,662.0 Z" fill="#f6f2e4" stroke="#5a5a52" stroke-width="1"/><path d="M1103.7,660.0 C1109.1,656.0 1116.3,656.0 1121.7,660.0 C1122.7,670.6 1119.0,679.0 1114.5,679.0 L1112.7,677.0 L1110.9,679.0 C1106.4,679.0 1102.7,670.6 1103.7,660.0 Z" fill="#f6f2e4" stroke="#5a5a52" stroke-width="1"/><path d="M1124.3,656.0 C1123.9,630.1 1129.3,617.5 1133.7,615.5 C1138.0,617.5 1141.3,630.1 1140.9,656.0 Z" fill="#f6f2e4" stroke="#5a5a52" stroke-width="1"/><path d="M1131.6,654.0 L1130.6,623.5 L1134.6,625.5 L1135.6,652.0 Z" fill="#111"/><path d="M1121.7,654.0 C1128.2,650.0 1137.0,650.0 1143.5,654.0 C1144.5,667.9 1140.2,678.5 1134.8,678.5 L1132.6,676.5 L1130.4,678.5 C1125.0,678.5 1120.7,667.9 1121.7,654.0 Z" fill="#f6f2e4" stroke="#5a5a52" stroke-width="1"/><path d="M1146.1,657.0 C1145.7,631.4 1151.2,619.0 1155.6,617.0 C1160.0,619.0 1163.3,631.4 1162.9,657.0 Z" fill="#f6f2e4" stroke="#5a5a52" stroke-width="1"/><path d="M1143.5,655.0 C1150.1,651.0 1158.9,651.0 1165.5,655.0 C1166.5,668.3 1162.2,678.5 1156.7,678.5 L1154.5,676.5 L1152.3,678.5 C1146.8,678.5 1142.5,668.3 1143.5,655.0 Z" fill="#f6f2e4" stroke="#5a5a52" stroke-width="1"/><path d="M1167.7,659.0 C1167.3,633.1 1171.8,620.5 1175.4,618.5 C1179.0,620.5 1181.7,633.1 1181.3,659.0 Z" fill="#f6f2e4" stroke="#5a5a52" stroke-width="1"/><path d="M1165.5,657.0 C1170.9,653.0 1178.1,653.0 1183.5,657.0 C1184.5,667.6 1180.8,676.0 1176.3,676.0 L1174.5,674.0 L1172.7,676.0 C1168.2,676.0 1164.5,667.6 1165.5,657.0 Z" fill="#f6f2e4" stroke="#5a5a52" stroke-width="1"/><path d="M1185.6,662.0 C1185.2,630.7 1189.5,614.5 1193.0,612.5 C1196.4,614.5 1199.0,630.7 1198.6,662.0 Z" fill="#f6f2e4" stroke="#5a5a52" stroke-width="1"/><path d="M1183.5,660.0 C1188.7,656.0 1195.5,656.0 1200.7,660.0 C1201.7,671.2 1198.1,680.0 1193.8,680.0 L1192.1,678.0 L1190.4,680.0 C1186.1,680.0 1182.5,671.2 1183.5,660.0 Z" fill="#f6f2e4" stroke="#5a5a52" stroke-width="1"/><path d="M1203.0,666.0 C1202.6,639.5 1206.3,626.5 1210.1,624.5 C1213.9,626.5 1217.6,639.5 1217.2,666.0 Z" fill="#f6f2e4" stroke="#5a5a52" stroke-width="1"/><path d="M1200.7,664.0 C1206.3,660.0 1213.9,660.0 1219.5,664.0 C1220.5,674.6 1216.7,683.0 1212.0,683.0 L1210.1,681.0 L1208.2,683.0 C1203.5,683.0 1199.7,674.6 1200.7,664.0 Z" fill="#2ae4f0" stroke="#1aa8b8" stroke-width="1"/><rect x="1207.1" y="662.0" width="6" height="5" fill="#eeeee4" stroke="#666" stroke-width=".5"/><path d="M1221.5,668.0 C1221.2,642.4 1224.5,630.0 1227.8,628.0 C1231.0,630.0 1234.3,642.4 1234.0,668.0 Z" fill="#f6f2e4" stroke="#5a5a52" stroke-width="1"/><path d="M1219.5,666.0 C1224.5,662.0 1231.0,662.0 1236.0,666.0 C1237.0,677.6 1233.5,686.7 1229.4,686.7 L1227.8,684.7 L1226.1,686.7 C1222.0,686.7 1218.5,677.6 1219.5,666.0 Z" fill="#7a7a7a" stroke="#5a5a52" stroke-width="1"/><rect x="1224.8" y="664.0" width="6" height="5" fill="#eeeee4" stroke="#666" stroke-width=".5"/><path d="M1238.3,668.0 C1237.4,647.5 1241.7,631.0 1246.0,631.0 C1248.8,634.0 1250.2,637.0 1250.2,637.0 C1250.2,637.0 1251.7,631.0 1256.0,632.0 C1260.2,634.0 1263.1,647.5 1262.2,668.0 Z" fill="#f6f2e4" stroke="#5a5a52" stroke-width="1"/><path d="M1244.5,662.0 C1244.5,641.0 1247.4,635.0 1248.8,641.0 L1248.8,658.0 Z" fill="none" stroke="#8a8a80" stroke-width=".8"/><path d="M1236.0,666.0 C1244.5,662.0 1256.0,662.0 1264.5,666.0 C1265.5,676.6 1260.2,685.0 1253.1,685.0 L1250.2,683.0 L1247.4,685.0 C1240.3,685.0 1235.0,676.6 1236.0,666.0 Z" fill="#7a7a7a" stroke="#5a5a52" stroke-width="1"/><rect x="1247.2" y="664.0" width="6" height="5" fill="#eeeee4" stroke="#666" stroke-width=".5"/><path d="M1266.4,668.0 C1265.7,647.5 1269.3,631.0 1272.9,631.0 C1275.3,634.0 1276.5,637.0 1276.5,637.0 C1276.5,637.0 1277.7,631.0 1281.3,632.0 C1284.9,634.0 1287.3,647.5 1286.6,668.0 Z" fill="#f6f2e4" stroke="#5a5a52" stroke-width="1"/><path d="M1271.7,662.0 C1271.7,641.0 1274.1,635.0 1275.3,641.0 L1275.3,658.0 Z" fill="none" stroke="#8a8a80" stroke-width=".8"/><path d="M1264.5,666.0 C1271.7,662.0 1281.3,662.0 1288.5,666.0 C1289.5,675.4 1284.9,683.0 1278.9,683.0 L1276.5,681.0 L1274.1,683.0 C1268.1,683.0 1263.5,675.4 1264.5,666.0 Z" fill="#7a7a7a" stroke="#5a5a52" stroke-width="1"/><rect x="1273.5" y="664.0" width="6" height="5" fill="#eeeee4" stroke="#666" stroke-width=".5"/><path d="M1290.2,663.0 C1289.6,645.5 1292.8,632.0 1296.0,632.0 C1298.2,635.0 1299.2,638.0 1299.2,638.0 C1299.2,638.0 1300.3,632.0 1303.5,633.0 C1306.8,635.0 1308.9,645.5 1308.3,663.0 Z" fill="#1a1a1a" stroke="#5a5a52" stroke-width="1"/><path d="M1288.5,661.0 C1295.0,657.0 1303.5,657.0 1310.0,661.0 C1311.0,670.7 1306.8,678.5 1301.4,678.5 L1299.2,676.5 L1297.1,678.5 C1291.7,678.5 1287.5,670.7 1288.5,661.0 Z" fill="#f6f2e4" stroke="#5a5a52" stroke-width="1"/><path d="M1023.5,665 C1031.5,661 1041.7,661 1049.7,665 C1050.7,677 1045.7,686 1039.6,686 L1036.6,684 L1033.6,686 C1027.5,686 1022.5,677 1023.5,665 Z" fill="#2ae4f0" stroke="#1aa8b8" stroke-width="1"/><rect x="1033.6" y="663" width="6" height="5" fill="#eeeee4" stroke="#666" stroke-width=".5"/><path d="M982.0,779.0 C981.0,800.8 984.2,812.7 988.0,812.7 C990.5,810.7 991.0,793.4 993.0,791.9 C994.9,793.4 996.7,811.7 999.9,811.7 C1003.4,809.7 1004.7,800.8 1003.9,779.0 Z" fill="#f6f2e4" stroke="#5a5a52" stroke-width="1"/><path d="M980.5,781.0 C979.5,770.8 984.2,765.5 990.5,765.5 L993.0,768.5 L995.4,765.5 C1001.7,765.5 1006.4,770.8 1005.4,781.0 C997.9,785.0 988.0,785.0 980.5,781.0 Z" fill="#f8f5ea" stroke="#5a5a52" stroke-width="1"/><path d="M1006.9,781.0 C1005.9,805.4 1009.2,819.0 1013.1,819.0 C1015.6,817.0 1016.2,796.9 1018.2,795.2 C1020.2,796.9 1022.0,818.0 1025.4,818.0 C1029.0,816.0 1030.2,805.4 1029.5,781.0 Z" fill="#f6f2e4" stroke="#5a5a52" stroke-width="1"/><path d="M1005.4,783.0 C1004.4,773.1 1009.2,768.0 1015.6,768.0 L1018.2,771.0 L1020.8,768.0 C1027.2,768.0 1032.0,773.1 1031.0,783.0 C1023.3,787.0 1013.1,787.0 1005.4,783.0 Z" fill="#f8f5ea" stroke="#5a5a52" stroke-width="1"/><path d="M1032.7,783.0 C1031.6,808.9 1035.3,823.5 1039.7,823.5 C1042.6,821.5 1043.2,799.8 1045.5,798.0 C1047.8,799.8 1049.8,822.5 1053.6,822.5 C1057.7,820.5 1059.1,808.9 1058.3,783.0 Z" fill="#f6f2e4" stroke="#5a5a52" stroke-width="1"/><path d="M1031.0,785.0 C1030.0,773.0 1035.3,767.0 1042.6,767.0 L1045.5,770.0 L1048.4,767.0 C1055.7,767.0 1061.0,773.0 1060.0,785.0 C1051.3,789.0 1039.7,789.0 1031.0,785.0 Z" fill="#f8f5ea" stroke="#5a5a52" stroke-width="1"/><path d="M1061.9,780.5 C1061.9,807.4 1066.7,821.7 1069.5,822.7 C1072.3,821.7 1077.1,807.4 1077.1,780.5 Z" fill="#f6f2e4" stroke="#5a5a52" stroke-width="1"/><path d="M1060.0,782.5 C1059.0,770.0 1062.8,763.8 1067.6,763.8 L1069.5,763.8 L1071.4,763.8 C1076.2,763.8 1080.0,770.0 1079.0,782.5 C1073.3,786.5 1065.7,786.5 1060.0,782.5 Z" fill="#f8f5ea" stroke="#5a5a52" stroke-width="1"/><path d="M1080.8,780.0 C1080.8,805.2 1085.1,818.3 1087.8,819.3 C1090.4,818.3 1094.8,805.2 1094.8,780.0 Z" fill="#f6f2e4" stroke="#5a5a52" stroke-width="1"/><path d="M1079.0,782.0 C1078.0,767.9 1081.6,761.0 1086.0,761.0 L1087.8,761.0 L1089.5,761.0 C1093.9,761.0 1097.5,767.9 1096.5,782.0 C1091.2,786.0 1084.2,786.0 1079.0,782.0 Z" fill="#f8f5ea" stroke="#5a5a52" stroke-width="1"/><path d="M1098.5,783.0 C1098.5,812.4 1103.7,828.3 1106.8,829.3 C1109.8,828.3 1115.0,812.4 1115.0,783.0 Z" fill="#f6f2e4" stroke="#5a5a52" stroke-width="1"/><path d="M1096.5,785.0 C1095.5,767.3 1099.6,758.8 1104.7,758.8 L1106.8,758.8 L1108.8,758.8 C1113.9,758.8 1118.0,767.3 1117.0,785.0 C1110.8,789.0 1102.7,789.0 1096.5,785.0 Z" fill="#f8f5ea" stroke="#5a5a52" stroke-width="1"/><path d="M1118.4,776.0 C1118.4,803.4 1122.0,818.0 1124.2,819.0 C1126.3,818.0 1129.9,803.4 1129.9,776.0 Z" fill="#f6f2e4" stroke="#5a5a52" stroke-width="1"/><path d="M1117.0,778.0 C1116.0,765.2 1119.1,758.8 1122.7,758.8 L1124.2,758.8 L1125.6,758.8 C1129.2,758.8 1132.3,765.2 1131.3,778.0 C1127.0,782.0 1121.3,782.0 1117.0,778.0 Z" fill="#f8f5ea" stroke="#5a5a52" stroke-width="1"/><path d="M1132.6,775.0 C1132.6,799.7 1136.0,812.5 1137.9,813.5 C1139.9,812.5 1143.3,799.7 1143.3,775.0 Z" fill="#f6f2e4" stroke="#5a5a52" stroke-width="1"/><path d="M1131.3,777.0 C1130.3,763.6 1133.3,757.0 1136.6,757.0 L1137.9,757.0 L1139.3,757.0 C1142.6,757.0 1145.6,763.6 1144.6,777.0 C1140.6,781.0 1135.3,781.0 1131.3,777.0 Z" fill="#f8f5ea" stroke="#5a5a52" stroke-width="1"/><path d="M1145.8,775.0 C1145.8,799.2 1148.8,811.7 1150.6,812.7 C1152.4,811.7 1155.4,799.2 1155.4,775.0 Z" fill="#f6f2e4" stroke="#5a5a52" stroke-width="1"/><path d="M1144.6,777.0 C1143.6,763.6 1146.4,757.0 1149.4,757.0 L1150.6,757.0 L1151.8,757.0 C1154.8,757.0 1157.6,763.6 1156.6,777.0 C1153.0,781.0 1148.2,781.0 1144.6,777.0 Z" fill="#f8f5ea" stroke="#5a5a52" stroke-width="1"/><path d="M1158.0,776.0 C1158.0,803.4 1161.5,818.0 1163.7,819.0 C1165.8,818.0 1169.3,803.4 1169.3,776.0 Z" fill="#f6f2e4" stroke="#5a5a52" stroke-width="1"/><path d="M1156.6,778.0 C1155.6,764.6 1158.7,758.0 1162.2,758.0 L1163.7,758.0 L1165.1,758.0 C1168.6,758.0 1171.7,764.6 1170.7,778.0 C1166.5,782.0 1160.8,782.0 1156.6,778.0 Z" fill="#f8f5ea" stroke="#5a5a52" stroke-width="1"/><path d="M1172.6,783.0 C1172.6,811.9 1177.4,827.5 1180.2,828.5 C1183.0,827.5 1187.8,811.9 1187.8,783.0 Z" fill="#f6f2e4" stroke="#5a5a52" stroke-width="1"/><path d="M1170.7,785.0 C1169.7,767.9 1173.5,759.7 1178.3,759.7 L1180.2,759.7 L1182.1,759.7 C1186.9,759.7 1190.7,767.9 1189.7,785.0 C1184.0,789.0 1176.4,789.0 1170.7,785.0 Z" fill="#f8f5ea" stroke="#5a5a52" stroke-width="1"/><path d="M1191.4,780.0 C1191.4,805.2 1195.8,818.3 1198.4,819.3 C1201.0,818.3 1205.4,805.2 1205.4,780.0 Z" fill="#f6f2e4" stroke="#5a5a52" stroke-width="1"/><path d="M1189.7,782.0 C1188.7,767.9 1192.3,761.0 1196.7,761.0 L1198.4,761.0 L1200.1,761.0 C1204.5,761.0 1208.1,767.9 1207.1,782.0 C1201.9,786.0 1194.9,786.0 1189.7,782.0 Z" fill="#f8f5ea" stroke="#5a5a52" stroke-width="1"/><path d="M1208.9,780.5 C1208.9,806.9 1213.5,820.8 1216.2,821.8 C1219.0,820.8 1223.6,806.9 1223.6,780.5 Z" fill="#f6f2e4" stroke="#5a5a52" stroke-width="1"/><path d="M1207.1,782.5 C1206.1,770.1 1209.8,764.0 1214.4,764.0 L1216.2,764.0 L1218.1,764.0 C1222.7,764.0 1226.4,770.1 1225.4,782.5 C1219.9,786.5 1212.6,786.5 1207.1,782.5 Z" fill="#f8f5ea" stroke="#5a5a52" stroke-width="1"/><path d="M1227.1,783.0 C1226.0,808.4 1229.8,822.7 1234.1,822.7 C1237.0,820.7 1237.6,799.5 1239.9,797.7 C1242.2,799.5 1244.2,821.7 1248.0,821.7 C1252.1,819.7 1253.5,808.4 1252.7,783.0 Z" fill="#f6f2e4" stroke="#5a5a52" stroke-width="1"/><path d="M1225.4,785.0 C1224.4,773.7 1229.8,768.0 1237.0,768.0 L1239.9,771.0 L1242.8,768.0 C1250.1,768.0 1255.4,773.7 1254.4,785.0 C1245.7,789.0 1234.1,789.0 1225.4,785.0 Z" fill="#f8f5ea" stroke="#5a5a52" stroke-width="1"/><path d="M1255.9,781.0 C1254.9,805.1 1258.2,818.5 1262.1,818.5 C1264.6,816.5 1265.2,796.7 1267.2,795.0 C1269.2,796.7 1271.0,817.5 1274.4,817.5 C1278.0,815.5 1279.2,805.1 1278.5,781.0 Z" fill="#f6f2e4" stroke="#5a5a52" stroke-width="1"/><path d="M1254.4,783.0 C1253.4,773.1 1258.2,768.0 1264.6,768.0 L1267.2,771.0 L1269.8,768.0 C1276.2,768.0 1281.0,773.1 1280.0,783.0 C1272.3,787.0 1262.1,787.0 1254.4,783.0 Z" fill="#f8f5ea" stroke="#5a5a52" stroke-width="1"/><path d="M1281.5,779.0 C1280.5,800.3 1283.9,811.9 1287.7,811.9 C1290.3,809.9 1290.8,793.1 1292.9,791.7 C1295.0,793.1 1296.8,810.9 1300.1,810.9 C1303.7,808.9 1305.0,800.3 1304.3,779.0 Z" fill="#f6f2e4" stroke="#5a5a52" stroke-width="1"/><path d="M1280.0,781.0 C1279.0,771.1 1283.9,766.0 1290.3,766.0 L1292.9,769.0 L1295.5,766.0 C1301.9,766.0 1306.8,771.1 1305.8,781.0 C1298.1,785.0 1287.7,785.0 1280.0,781.0 Z" fill="#f8f5ea" stroke="#5a5a52" stroke-width="1"/></svg><!--/TEETH-->

<div class="a" style="left:0;top:16px;width:1px;height:859px;background:#8aa2b8"></div>
<div class="a" style="left:1599px;top:16px;width:1px;height:859px;background:#9ab0c4"></div>
<div class="a" style="left:10px;top:671px;width:12px;height:32px;background:linear-gradient(90deg,rgba(190,196,204,.85),rgba(235,238,242,.5));border-radius:0 3px 3px 0"></div>
<!-- status bar -->
<div class="a" style="left:993px;top:858px;width:607px;height:16px;background:linear-gradient(#bcd8f2,#a0c6ea);border-left:1px solid #d8e8f6"></div>
<div class="t" style="left:1033px;top:862px;font-size:8.5px;color:#5a7aa4">01911</div>
<div class="t" style="left:1404px;top:862px;font-size:8.5px;color:#5a7aa4">NUM</div>
<div class="t" style="left:1478px;top:862px;font-size:8.5px;color:#5a7aa4">09/06/2014</div>
<div class="t" style="left:1540px;top:862px;font-size:8.5px;color:#5a7aa4">16:59:53</div>
</body></html>
